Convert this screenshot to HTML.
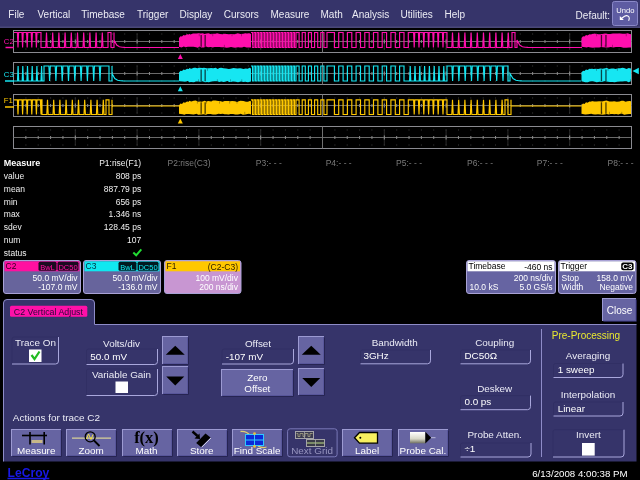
<!DOCTYPE html>
<html><head><meta charset="utf-8"><style>
html,body{margin:0;padding:0;background:#000;width:640px;height:480px;overflow:hidden}
svg{display:block;will-change:transform}
text{font-family:"Liberation Sans", sans-serif}
</style></head><body>
<svg width="640" height="480" viewBox="0 0 640 480">
<defs><clipPath id="gclip0"><rect x="14" y="29.5" width="617" height="24"/></clipPath><clipPath id="gclip1"><rect x="14" y="61.5" width="617" height="24"/></clipPath><clipPath id="gclip2"><rect x="14" y="93.5" width="617" height="24"/></clipPath></defs>
<rect x="0" y="0" width="640" height="480" fill="#000"/>
<rect x="0" y="0" width="640" height="28" fill="#36346a" stroke="none" stroke-width="1" rx="0" /><rect x="0" y="26.5" width="640" height="1.5" fill="#4a4878" stroke="none" stroke-width="1" rx="0" /><text x="8.3" y="18" font-size="10" fill="#ececf4" text-anchor="start" font-weight="normal" >File</text><text x="37.5" y="18" font-size="10" fill="#ececf4" text-anchor="start" font-weight="normal" >Vertical</text><text x="81.3" y="18" font-size="10" fill="#ececf4" text-anchor="start" font-weight="normal" >Timebase</text><text x="137" y="18" font-size="10" fill="#ececf4" text-anchor="start" font-weight="normal" >Trigger</text><text x="179.5" y="18" font-size="10" fill="#ececf4" text-anchor="start" font-weight="normal" >Display</text><text x="223.8" y="18" font-size="10" fill="#ececf4" text-anchor="start" font-weight="normal" >Cursors</text><text x="270.5" y="18" font-size="10" fill="#ececf4" text-anchor="start" font-weight="normal" >Measure</text><text x="320.5" y="18" font-size="10" fill="#ececf4" text-anchor="start" font-weight="normal" >Math</text><text x="352" y="18" font-size="10" fill="#ececf4" text-anchor="start" font-weight="normal" >Analysis</text><text x="400.5" y="18" font-size="10" fill="#ececf4" text-anchor="start" font-weight="normal" >Utilities</text><text x="444.5" y="18" font-size="10" fill="#ececf4" text-anchor="start" font-weight="normal" >Help</text><text x="575.6" y="18.5" font-size="10" fill="#ececf4" text-anchor="start" font-weight="normal" >Default:</text><rect x="612.5" y="1.5" width="25" height="24" fill="#5e5ca2" stroke="#8a88c8" stroke-width="1" rx="2" /><text x="625.3" y="12.8" font-size="7.6" fill="#fff" text-anchor="middle" font-weight="normal" >Undo</text><path d="M619.8,16 L619.8,20 L623.8,20 Z" fill="#fff" stroke="none" stroke-width="1" /><path d="M621,18.8 L624.5,16.2 Q627.5,14.8 629,17 Q629.8,18.5 628.6,20.8" fill="none" stroke="#fff" stroke-width="1.1" /><rect x="13.5" y="30.5" width="618.0" height="22" fill="none" stroke="#8a8a90" stroke-width="1" rx="0" /><line x1="13.5" y1="41.5" x2="631.5" y2="41.5" stroke="#6a6a6a" stroke-width="1" /><line x1="322.5" y1="30.5" x2="322.5" y2="52.5" stroke="#707070" stroke-width="1" /><line x1="25.86" y1="40.0" x2="25.86" y2="43.0" stroke="#8a8a8a" stroke-width="1" /><rect x="25.4" y="33.5" width="1" height="1" fill="#3c3c3c"/><rect x="25.4" y="48.5" width="1" height="1" fill="#3c3c3c"/><line x1="38.22" y1="40.0" x2="38.22" y2="43.0" stroke="#8a8a8a" stroke-width="1" /><rect x="37.7" y="33.5" width="1" height="1" fill="#3c3c3c"/><rect x="37.7" y="48.5" width="1" height="1" fill="#3c3c3c"/><line x1="50.58" y1="40.0" x2="50.58" y2="43.0" stroke="#8a8a8a" stroke-width="1" /><rect x="50.1" y="33.5" width="1" height="1" fill="#3c3c3c"/><rect x="50.1" y="48.5" width="1" height="1" fill="#3c3c3c"/><line x1="62.94" y1="40.0" x2="62.94" y2="43.0" stroke="#8a8a8a" stroke-width="1" /><rect x="62.4" y="33.5" width="1" height="1" fill="#3c3c3c"/><rect x="62.4" y="48.5" width="1" height="1" fill="#3c3c3c"/><line x1="75.3" y1="33.5" x2="75.3" y2="49.5" stroke="#2a2a2a" stroke-width="1" /><line x1="75.3" y1="39.5" x2="75.3" y2="43.5" stroke="#9a9a9a" stroke-width="1" /><rect x="74.8" y="33.5" width="1" height="1" fill="#3c3c3c"/><rect x="74.8" y="48.5" width="1" height="1" fill="#3c3c3c"/><line x1="87.66" y1="40.0" x2="87.66" y2="43.0" stroke="#8a8a8a" stroke-width="1" /><rect x="87.2" y="33.5" width="1" height="1" fill="#3c3c3c"/><rect x="87.2" y="48.5" width="1" height="1" fill="#3c3c3c"/><line x1="100.02" y1="40.0" x2="100.02" y2="43.0" stroke="#8a8a8a" stroke-width="1" /><rect x="99.5" y="33.5" width="1" height="1" fill="#3c3c3c"/><rect x="99.5" y="48.5" width="1" height="1" fill="#3c3c3c"/><line x1="112.38" y1="40.0" x2="112.38" y2="43.0" stroke="#8a8a8a" stroke-width="1" /><rect x="111.9" y="33.5" width="1" height="1" fill="#3c3c3c"/><rect x="111.9" y="48.5" width="1" height="1" fill="#3c3c3c"/><line x1="124.73999999999998" y1="40.0" x2="124.73999999999998" y2="43.0" stroke="#8a8a8a" stroke-width="1" /><rect x="124.2" y="33.5" width="1" height="1" fill="#3c3c3c"/><rect x="124.2" y="48.5" width="1" height="1" fill="#3c3c3c"/><line x1="137.1" y1="33.5" x2="137.1" y2="49.5" stroke="#2a2a2a" stroke-width="1" /><line x1="137.1" y1="39.5" x2="137.1" y2="43.5" stroke="#9a9a9a" stroke-width="1" /><rect x="136.6" y="33.5" width="1" height="1" fill="#3c3c3c"/><rect x="136.6" y="48.5" width="1" height="1" fill="#3c3c3c"/><line x1="149.45999999999998" y1="40.0" x2="149.45999999999998" y2="43.0" stroke="#8a8a8a" stroke-width="1" /><rect x="149.0" y="33.5" width="1" height="1" fill="#3c3c3c"/><rect x="149.0" y="48.5" width="1" height="1" fill="#3c3c3c"/><line x1="161.82" y1="40.0" x2="161.82" y2="43.0" stroke="#8a8a8a" stroke-width="1" /><rect x="161.3" y="33.5" width="1" height="1" fill="#3c3c3c"/><rect x="161.3" y="48.5" width="1" height="1" fill="#3c3c3c"/><line x1="174.18" y1="40.0" x2="174.18" y2="43.0" stroke="#8a8a8a" stroke-width="1" /><rect x="173.7" y="33.5" width="1" height="1" fill="#3c3c3c"/><rect x="173.7" y="48.5" width="1" height="1" fill="#3c3c3c"/><line x1="186.54" y1="40.0" x2="186.54" y2="43.0" stroke="#8a8a8a" stroke-width="1" /><rect x="186.0" y="33.5" width="1" height="1" fill="#3c3c3c"/><rect x="186.0" y="48.5" width="1" height="1" fill="#3c3c3c"/><line x1="198.9" y1="33.5" x2="198.9" y2="49.5" stroke="#2a2a2a" stroke-width="1" /><line x1="198.9" y1="39.5" x2="198.9" y2="43.5" stroke="#9a9a9a" stroke-width="1" /><rect x="198.4" y="33.5" width="1" height="1" fill="#3c3c3c"/><rect x="198.4" y="48.5" width="1" height="1" fill="#3c3c3c"/><line x1="211.26" y1="40.0" x2="211.26" y2="43.0" stroke="#8a8a8a" stroke-width="1" /><rect x="210.8" y="33.5" width="1" height="1" fill="#3c3c3c"/><rect x="210.8" y="48.5" width="1" height="1" fill="#3c3c3c"/><line x1="223.61999999999998" y1="40.0" x2="223.61999999999998" y2="43.0" stroke="#8a8a8a" stroke-width="1" /><rect x="223.1" y="33.5" width="1" height="1" fill="#3c3c3c"/><rect x="223.1" y="48.5" width="1" height="1" fill="#3c3c3c"/><line x1="235.97999999999996" y1="40.0" x2="235.97999999999996" y2="43.0" stroke="#8a8a8a" stroke-width="1" /><rect x="235.5" y="33.5" width="1" height="1" fill="#3c3c3c"/><rect x="235.5" y="48.5" width="1" height="1" fill="#3c3c3c"/><line x1="248.34" y1="40.0" x2="248.34" y2="43.0" stroke="#8a8a8a" stroke-width="1" /><rect x="247.8" y="33.5" width="1" height="1" fill="#3c3c3c"/><rect x="247.8" y="48.5" width="1" height="1" fill="#3c3c3c"/><line x1="260.7" y1="33.5" x2="260.7" y2="49.5" stroke="#2a2a2a" stroke-width="1" /><line x1="260.7" y1="39.5" x2="260.7" y2="43.5" stroke="#9a9a9a" stroke-width="1" /><rect x="260.2" y="33.5" width="1" height="1" fill="#3c3c3c"/><rect x="260.2" y="48.5" width="1" height="1" fill="#3c3c3c"/><line x1="273.06" y1="40.0" x2="273.06" y2="43.0" stroke="#8a8a8a" stroke-width="1" /><rect x="272.6" y="33.5" width="1" height="1" fill="#3c3c3c"/><rect x="272.6" y="48.5" width="1" height="1" fill="#3c3c3c"/><line x1="285.41999999999996" y1="40.0" x2="285.41999999999996" y2="43.0" stroke="#8a8a8a" stroke-width="1" /><rect x="284.9" y="33.5" width="1" height="1" fill="#3c3c3c"/><rect x="284.9" y="48.5" width="1" height="1" fill="#3c3c3c"/><line x1="297.78" y1="40.0" x2="297.78" y2="43.0" stroke="#8a8a8a" stroke-width="1" /><rect x="297.3" y="33.5" width="1" height="1" fill="#3c3c3c"/><rect x="297.3" y="48.5" width="1" height="1" fill="#3c3c3c"/><line x1="310.14" y1="40.0" x2="310.14" y2="43.0" stroke="#8a8a8a" stroke-width="1" /><rect x="309.6" y="33.5" width="1" height="1" fill="#3c3c3c"/><rect x="309.6" y="48.5" width="1" height="1" fill="#3c3c3c"/><line x1="334.86" y1="40.0" x2="334.86" y2="43.0" stroke="#8a8a8a" stroke-width="1" /><rect x="334.4" y="33.5" width="1" height="1" fill="#3c3c3c"/><rect x="334.4" y="48.5" width="1" height="1" fill="#3c3c3c"/><line x1="347.21999999999997" y1="40.0" x2="347.21999999999997" y2="43.0" stroke="#8a8a8a" stroke-width="1" /><rect x="346.7" y="33.5" width="1" height="1" fill="#3c3c3c"/><rect x="346.7" y="48.5" width="1" height="1" fill="#3c3c3c"/><line x1="359.58" y1="40.0" x2="359.58" y2="43.0" stroke="#8a8a8a" stroke-width="1" /><rect x="359.1" y="33.5" width="1" height="1" fill="#3c3c3c"/><rect x="359.1" y="48.5" width="1" height="1" fill="#3c3c3c"/><line x1="371.93999999999994" y1="40.0" x2="371.93999999999994" y2="43.0" stroke="#8a8a8a" stroke-width="1" /><rect x="371.4" y="33.5" width="1" height="1" fill="#3c3c3c"/><rect x="371.4" y="48.5" width="1" height="1" fill="#3c3c3c"/><line x1="384.3" y1="33.5" x2="384.3" y2="49.5" stroke="#2a2a2a" stroke-width="1" /><line x1="384.3" y1="39.5" x2="384.3" y2="43.5" stroke="#9a9a9a" stroke-width="1" /><rect x="383.8" y="33.5" width="1" height="1" fill="#3c3c3c"/><rect x="383.8" y="48.5" width="1" height="1" fill="#3c3c3c"/><line x1="396.65999999999997" y1="40.0" x2="396.65999999999997" y2="43.0" stroke="#8a8a8a" stroke-width="1" /><rect x="396.2" y="33.5" width="1" height="1" fill="#3c3c3c"/><rect x="396.2" y="48.5" width="1" height="1" fill="#3c3c3c"/><line x1="409.02" y1="40.0" x2="409.02" y2="43.0" stroke="#8a8a8a" stroke-width="1" /><rect x="408.5" y="33.5" width="1" height="1" fill="#3c3c3c"/><rect x="408.5" y="48.5" width="1" height="1" fill="#3c3c3c"/><line x1="421.38" y1="40.0" x2="421.38" y2="43.0" stroke="#8a8a8a" stroke-width="1" /><rect x="420.9" y="33.5" width="1" height="1" fill="#3c3c3c"/><rect x="420.9" y="48.5" width="1" height="1" fill="#3c3c3c"/><line x1="433.73999999999995" y1="40.0" x2="433.73999999999995" y2="43.0" stroke="#8a8a8a" stroke-width="1" /><rect x="433.2" y="33.5" width="1" height="1" fill="#3c3c3c"/><rect x="433.2" y="48.5" width="1" height="1" fill="#3c3c3c"/><line x1="446.1" y1="33.5" x2="446.1" y2="49.5" stroke="#2a2a2a" stroke-width="1" /><line x1="446.1" y1="39.5" x2="446.1" y2="43.5" stroke="#9a9a9a" stroke-width="1" /><rect x="445.6" y="33.5" width="1" height="1" fill="#3c3c3c"/><rect x="445.6" y="48.5" width="1" height="1" fill="#3c3c3c"/><line x1="458.4599999999999" y1="40.0" x2="458.4599999999999" y2="43.0" stroke="#8a8a8a" stroke-width="1" /><rect x="458.0" y="33.5" width="1" height="1" fill="#3c3c3c"/><rect x="458.0" y="48.5" width="1" height="1" fill="#3c3c3c"/><line x1="470.82" y1="40.0" x2="470.82" y2="43.0" stroke="#8a8a8a" stroke-width="1" /><rect x="470.3" y="33.5" width="1" height="1" fill="#3c3c3c"/><rect x="470.3" y="48.5" width="1" height="1" fill="#3c3c3c"/><line x1="483.18" y1="40.0" x2="483.18" y2="43.0" stroke="#8a8a8a" stroke-width="1" /><rect x="482.7" y="33.5" width="1" height="1" fill="#3c3c3c"/><rect x="482.7" y="48.5" width="1" height="1" fill="#3c3c3c"/><line x1="495.53999999999996" y1="40.0" x2="495.53999999999996" y2="43.0" stroke="#8a8a8a" stroke-width="1" /><rect x="495.0" y="33.5" width="1" height="1" fill="#3c3c3c"/><rect x="495.0" y="48.5" width="1" height="1" fill="#3c3c3c"/><line x1="507.9" y1="33.5" x2="507.9" y2="49.5" stroke="#2a2a2a" stroke-width="1" /><line x1="507.9" y1="39.5" x2="507.9" y2="43.5" stroke="#9a9a9a" stroke-width="1" /><rect x="507.4" y="33.5" width="1" height="1" fill="#3c3c3c"/><rect x="507.4" y="48.5" width="1" height="1" fill="#3c3c3c"/><line x1="520.26" y1="40.0" x2="520.26" y2="43.0" stroke="#8a8a8a" stroke-width="1" /><rect x="519.8" y="33.5" width="1" height="1" fill="#3c3c3c"/><rect x="519.8" y="48.5" width="1" height="1" fill="#3c3c3c"/><line x1="532.62" y1="40.0" x2="532.62" y2="43.0" stroke="#8a8a8a" stroke-width="1" /><rect x="532.1" y="33.5" width="1" height="1" fill="#3c3c3c"/><rect x="532.1" y="48.5" width="1" height="1" fill="#3c3c3c"/><line x1="544.98" y1="40.0" x2="544.98" y2="43.0" stroke="#8a8a8a" stroke-width="1" /><rect x="544.5" y="33.5" width="1" height="1" fill="#3c3c3c"/><rect x="544.5" y="48.5" width="1" height="1" fill="#3c3c3c"/><line x1="557.3399999999999" y1="40.0" x2="557.3399999999999" y2="43.0" stroke="#8a8a8a" stroke-width="1" /><rect x="556.8" y="33.5" width="1" height="1" fill="#3c3c3c"/><rect x="556.8" y="48.5" width="1" height="1" fill="#3c3c3c"/><line x1="569.7" y1="33.5" x2="569.7" y2="49.5" stroke="#2a2a2a" stroke-width="1" /><line x1="569.7" y1="39.5" x2="569.7" y2="43.5" stroke="#9a9a9a" stroke-width="1" /><rect x="569.2" y="33.5" width="1" height="1" fill="#3c3c3c"/><rect x="569.2" y="48.5" width="1" height="1" fill="#3c3c3c"/><line x1="582.06" y1="40.0" x2="582.06" y2="43.0" stroke="#8a8a8a" stroke-width="1" /><rect x="581.6" y="33.5" width="1" height="1" fill="#3c3c3c"/><rect x="581.6" y="48.5" width="1" height="1" fill="#3c3c3c"/><line x1="594.42" y1="40.0" x2="594.42" y2="43.0" stroke="#8a8a8a" stroke-width="1" /><rect x="593.9" y="33.5" width="1" height="1" fill="#3c3c3c"/><rect x="593.9" y="48.5" width="1" height="1" fill="#3c3c3c"/><line x1="606.78" y1="40.0" x2="606.78" y2="43.0" stroke="#8a8a8a" stroke-width="1" /><rect x="606.3" y="33.5" width="1" height="1" fill="#3c3c3c"/><rect x="606.3" y="48.5" width="1" height="1" fill="#3c3c3c"/><line x1="619.14" y1="40.0" x2="619.14" y2="43.0" stroke="#8a8a8a" stroke-width="1" /><rect x="618.6" y="33.5" width="1" height="1" fill="#3c3c3c"/><rect x="618.6" y="48.5" width="1" height="1" fill="#3c3c3c"/><rect x="13.5" y="62.5" width="618.0" height="22" fill="none" stroke="#8a8a90" stroke-width="1" rx="0" /><line x1="13.5" y1="73.5" x2="631.5" y2="73.5" stroke="#6a6a6a" stroke-width="1" /><line x1="322.5" y1="62.5" x2="322.5" y2="84.5" stroke="#707070" stroke-width="1" /><line x1="25.86" y1="72.0" x2="25.86" y2="75.0" stroke="#8a8a8a" stroke-width="1" /><rect x="25.4" y="65.5" width="1" height="1" fill="#3c3c3c"/><rect x="25.4" y="80.5" width="1" height="1" fill="#3c3c3c"/><line x1="38.22" y1="72.0" x2="38.22" y2="75.0" stroke="#8a8a8a" stroke-width="1" /><rect x="37.7" y="65.5" width="1" height="1" fill="#3c3c3c"/><rect x="37.7" y="80.5" width="1" height="1" fill="#3c3c3c"/><line x1="50.58" y1="72.0" x2="50.58" y2="75.0" stroke="#8a8a8a" stroke-width="1" /><rect x="50.1" y="65.5" width="1" height="1" fill="#3c3c3c"/><rect x="50.1" y="80.5" width="1" height="1" fill="#3c3c3c"/><line x1="62.94" y1="72.0" x2="62.94" y2="75.0" stroke="#8a8a8a" stroke-width="1" /><rect x="62.4" y="65.5" width="1" height="1" fill="#3c3c3c"/><rect x="62.4" y="80.5" width="1" height="1" fill="#3c3c3c"/><line x1="75.3" y1="65.5" x2="75.3" y2="81.5" stroke="#2a2a2a" stroke-width="1" /><line x1="75.3" y1="71.5" x2="75.3" y2="75.5" stroke="#9a9a9a" stroke-width="1" /><rect x="74.8" y="65.5" width="1" height="1" fill="#3c3c3c"/><rect x="74.8" y="80.5" width="1" height="1" fill="#3c3c3c"/><line x1="87.66" y1="72.0" x2="87.66" y2="75.0" stroke="#8a8a8a" stroke-width="1" /><rect x="87.2" y="65.5" width="1" height="1" fill="#3c3c3c"/><rect x="87.2" y="80.5" width="1" height="1" fill="#3c3c3c"/><line x1="100.02" y1="72.0" x2="100.02" y2="75.0" stroke="#8a8a8a" stroke-width="1" /><rect x="99.5" y="65.5" width="1" height="1" fill="#3c3c3c"/><rect x="99.5" y="80.5" width="1" height="1" fill="#3c3c3c"/><line x1="112.38" y1="72.0" x2="112.38" y2="75.0" stroke="#8a8a8a" stroke-width="1" /><rect x="111.9" y="65.5" width="1" height="1" fill="#3c3c3c"/><rect x="111.9" y="80.5" width="1" height="1" fill="#3c3c3c"/><line x1="124.73999999999998" y1="72.0" x2="124.73999999999998" y2="75.0" stroke="#8a8a8a" stroke-width="1" /><rect x="124.2" y="65.5" width="1" height="1" fill="#3c3c3c"/><rect x="124.2" y="80.5" width="1" height="1" fill="#3c3c3c"/><line x1="137.1" y1="65.5" x2="137.1" y2="81.5" stroke="#2a2a2a" stroke-width="1" /><line x1="137.1" y1="71.5" x2="137.1" y2="75.5" stroke="#9a9a9a" stroke-width="1" /><rect x="136.6" y="65.5" width="1" height="1" fill="#3c3c3c"/><rect x="136.6" y="80.5" width="1" height="1" fill="#3c3c3c"/><line x1="149.45999999999998" y1="72.0" x2="149.45999999999998" y2="75.0" stroke="#8a8a8a" stroke-width="1" /><rect x="149.0" y="65.5" width="1" height="1" fill="#3c3c3c"/><rect x="149.0" y="80.5" width="1" height="1" fill="#3c3c3c"/><line x1="161.82" y1="72.0" x2="161.82" y2="75.0" stroke="#8a8a8a" stroke-width="1" /><rect x="161.3" y="65.5" width="1" height="1" fill="#3c3c3c"/><rect x="161.3" y="80.5" width="1" height="1" fill="#3c3c3c"/><line x1="174.18" y1="72.0" x2="174.18" y2="75.0" stroke="#8a8a8a" stroke-width="1" /><rect x="173.7" y="65.5" width="1" height="1" fill="#3c3c3c"/><rect x="173.7" y="80.5" width="1" height="1" fill="#3c3c3c"/><line x1="186.54" y1="72.0" x2="186.54" y2="75.0" stroke="#8a8a8a" stroke-width="1" /><rect x="186.0" y="65.5" width="1" height="1" fill="#3c3c3c"/><rect x="186.0" y="80.5" width="1" height="1" fill="#3c3c3c"/><line x1="198.9" y1="65.5" x2="198.9" y2="81.5" stroke="#2a2a2a" stroke-width="1" /><line x1="198.9" y1="71.5" x2="198.9" y2="75.5" stroke="#9a9a9a" stroke-width="1" /><rect x="198.4" y="65.5" width="1" height="1" fill="#3c3c3c"/><rect x="198.4" y="80.5" width="1" height="1" fill="#3c3c3c"/><line x1="211.26" y1="72.0" x2="211.26" y2="75.0" stroke="#8a8a8a" stroke-width="1" /><rect x="210.8" y="65.5" width="1" height="1" fill="#3c3c3c"/><rect x="210.8" y="80.5" width="1" height="1" fill="#3c3c3c"/><line x1="223.61999999999998" y1="72.0" x2="223.61999999999998" y2="75.0" stroke="#8a8a8a" stroke-width="1" /><rect x="223.1" y="65.5" width="1" height="1" fill="#3c3c3c"/><rect x="223.1" y="80.5" width="1" height="1" fill="#3c3c3c"/><line x1="235.97999999999996" y1="72.0" x2="235.97999999999996" y2="75.0" stroke="#8a8a8a" stroke-width="1" /><rect x="235.5" y="65.5" width="1" height="1" fill="#3c3c3c"/><rect x="235.5" y="80.5" width="1" height="1" fill="#3c3c3c"/><line x1="248.34" y1="72.0" x2="248.34" y2="75.0" stroke="#8a8a8a" stroke-width="1" /><rect x="247.8" y="65.5" width="1" height="1" fill="#3c3c3c"/><rect x="247.8" y="80.5" width="1" height="1" fill="#3c3c3c"/><line x1="260.7" y1="65.5" x2="260.7" y2="81.5" stroke="#2a2a2a" stroke-width="1" /><line x1="260.7" y1="71.5" x2="260.7" y2="75.5" stroke="#9a9a9a" stroke-width="1" /><rect x="260.2" y="65.5" width="1" height="1" fill="#3c3c3c"/><rect x="260.2" y="80.5" width="1" height="1" fill="#3c3c3c"/><line x1="273.06" y1="72.0" x2="273.06" y2="75.0" stroke="#8a8a8a" stroke-width="1" /><rect x="272.6" y="65.5" width="1" height="1" fill="#3c3c3c"/><rect x="272.6" y="80.5" width="1" height="1" fill="#3c3c3c"/><line x1="285.41999999999996" y1="72.0" x2="285.41999999999996" y2="75.0" stroke="#8a8a8a" stroke-width="1" /><rect x="284.9" y="65.5" width="1" height="1" fill="#3c3c3c"/><rect x="284.9" y="80.5" width="1" height="1" fill="#3c3c3c"/><line x1="297.78" y1="72.0" x2="297.78" y2="75.0" stroke="#8a8a8a" stroke-width="1" /><rect x="297.3" y="65.5" width="1" height="1" fill="#3c3c3c"/><rect x="297.3" y="80.5" width="1" height="1" fill="#3c3c3c"/><line x1="310.14" y1="72.0" x2="310.14" y2="75.0" stroke="#8a8a8a" stroke-width="1" /><rect x="309.6" y="65.5" width="1" height="1" fill="#3c3c3c"/><rect x="309.6" y="80.5" width="1" height="1" fill="#3c3c3c"/><line x1="334.86" y1="72.0" x2="334.86" y2="75.0" stroke="#8a8a8a" stroke-width="1" /><rect x="334.4" y="65.5" width="1" height="1" fill="#3c3c3c"/><rect x="334.4" y="80.5" width="1" height="1" fill="#3c3c3c"/><line x1="347.21999999999997" y1="72.0" x2="347.21999999999997" y2="75.0" stroke="#8a8a8a" stroke-width="1" /><rect x="346.7" y="65.5" width="1" height="1" fill="#3c3c3c"/><rect x="346.7" y="80.5" width="1" height="1" fill="#3c3c3c"/><line x1="359.58" y1="72.0" x2="359.58" y2="75.0" stroke="#8a8a8a" stroke-width="1" /><rect x="359.1" y="65.5" width="1" height="1" fill="#3c3c3c"/><rect x="359.1" y="80.5" width="1" height="1" fill="#3c3c3c"/><line x1="371.93999999999994" y1="72.0" x2="371.93999999999994" y2="75.0" stroke="#8a8a8a" stroke-width="1" /><rect x="371.4" y="65.5" width="1" height="1" fill="#3c3c3c"/><rect x="371.4" y="80.5" width="1" height="1" fill="#3c3c3c"/><line x1="384.3" y1="65.5" x2="384.3" y2="81.5" stroke="#2a2a2a" stroke-width="1" /><line x1="384.3" y1="71.5" x2="384.3" y2="75.5" stroke="#9a9a9a" stroke-width="1" /><rect x="383.8" y="65.5" width="1" height="1" fill="#3c3c3c"/><rect x="383.8" y="80.5" width="1" height="1" fill="#3c3c3c"/><line x1="396.65999999999997" y1="72.0" x2="396.65999999999997" y2="75.0" stroke="#8a8a8a" stroke-width="1" /><rect x="396.2" y="65.5" width="1" height="1" fill="#3c3c3c"/><rect x="396.2" y="80.5" width="1" height="1" fill="#3c3c3c"/><line x1="409.02" y1="72.0" x2="409.02" y2="75.0" stroke="#8a8a8a" stroke-width="1" /><rect x="408.5" y="65.5" width="1" height="1" fill="#3c3c3c"/><rect x="408.5" y="80.5" width="1" height="1" fill="#3c3c3c"/><line x1="421.38" y1="72.0" x2="421.38" y2="75.0" stroke="#8a8a8a" stroke-width="1" /><rect x="420.9" y="65.5" width="1" height="1" fill="#3c3c3c"/><rect x="420.9" y="80.5" width="1" height="1" fill="#3c3c3c"/><line x1="433.73999999999995" y1="72.0" x2="433.73999999999995" y2="75.0" stroke="#8a8a8a" stroke-width="1" /><rect x="433.2" y="65.5" width="1" height="1" fill="#3c3c3c"/><rect x="433.2" y="80.5" width="1" height="1" fill="#3c3c3c"/><line x1="446.1" y1="65.5" x2="446.1" y2="81.5" stroke="#2a2a2a" stroke-width="1" /><line x1="446.1" y1="71.5" x2="446.1" y2="75.5" stroke="#9a9a9a" stroke-width="1" /><rect x="445.6" y="65.5" width="1" height="1" fill="#3c3c3c"/><rect x="445.6" y="80.5" width="1" height="1" fill="#3c3c3c"/><line x1="458.4599999999999" y1="72.0" x2="458.4599999999999" y2="75.0" stroke="#8a8a8a" stroke-width="1" /><rect x="458.0" y="65.5" width="1" height="1" fill="#3c3c3c"/><rect x="458.0" y="80.5" width="1" height="1" fill="#3c3c3c"/><line x1="470.82" y1="72.0" x2="470.82" y2="75.0" stroke="#8a8a8a" stroke-width="1" /><rect x="470.3" y="65.5" width="1" height="1" fill="#3c3c3c"/><rect x="470.3" y="80.5" width="1" height="1" fill="#3c3c3c"/><line x1="483.18" y1="72.0" x2="483.18" y2="75.0" stroke="#8a8a8a" stroke-width="1" /><rect x="482.7" y="65.5" width="1" height="1" fill="#3c3c3c"/><rect x="482.7" y="80.5" width="1" height="1" fill="#3c3c3c"/><line x1="495.53999999999996" y1="72.0" x2="495.53999999999996" y2="75.0" stroke="#8a8a8a" stroke-width="1" /><rect x="495.0" y="65.5" width="1" height="1" fill="#3c3c3c"/><rect x="495.0" y="80.5" width="1" height="1" fill="#3c3c3c"/><line x1="507.9" y1="65.5" x2="507.9" y2="81.5" stroke="#2a2a2a" stroke-width="1" /><line x1="507.9" y1="71.5" x2="507.9" y2="75.5" stroke="#9a9a9a" stroke-width="1" /><rect x="507.4" y="65.5" width="1" height="1" fill="#3c3c3c"/><rect x="507.4" y="80.5" width="1" height="1" fill="#3c3c3c"/><line x1="520.26" y1="72.0" x2="520.26" y2="75.0" stroke="#8a8a8a" stroke-width="1" /><rect x="519.8" y="65.5" width="1" height="1" fill="#3c3c3c"/><rect x="519.8" y="80.5" width="1" height="1" fill="#3c3c3c"/><line x1="532.62" y1="72.0" x2="532.62" y2="75.0" stroke="#8a8a8a" stroke-width="1" /><rect x="532.1" y="65.5" width="1" height="1" fill="#3c3c3c"/><rect x="532.1" y="80.5" width="1" height="1" fill="#3c3c3c"/><line x1="544.98" y1="72.0" x2="544.98" y2="75.0" stroke="#8a8a8a" stroke-width="1" /><rect x="544.5" y="65.5" width="1" height="1" fill="#3c3c3c"/><rect x="544.5" y="80.5" width="1" height="1" fill="#3c3c3c"/><line x1="557.3399999999999" y1="72.0" x2="557.3399999999999" y2="75.0" stroke="#8a8a8a" stroke-width="1" /><rect x="556.8" y="65.5" width="1" height="1" fill="#3c3c3c"/><rect x="556.8" y="80.5" width="1" height="1" fill="#3c3c3c"/><line x1="569.7" y1="65.5" x2="569.7" y2="81.5" stroke="#2a2a2a" stroke-width="1" /><line x1="569.7" y1="71.5" x2="569.7" y2="75.5" stroke="#9a9a9a" stroke-width="1" /><rect x="569.2" y="65.5" width="1" height="1" fill="#3c3c3c"/><rect x="569.2" y="80.5" width="1" height="1" fill="#3c3c3c"/><line x1="582.06" y1="72.0" x2="582.06" y2="75.0" stroke="#8a8a8a" stroke-width="1" /><rect x="581.6" y="65.5" width="1" height="1" fill="#3c3c3c"/><rect x="581.6" y="80.5" width="1" height="1" fill="#3c3c3c"/><line x1="594.42" y1="72.0" x2="594.42" y2="75.0" stroke="#8a8a8a" stroke-width="1" /><rect x="593.9" y="65.5" width="1" height="1" fill="#3c3c3c"/><rect x="593.9" y="80.5" width="1" height="1" fill="#3c3c3c"/><line x1="606.78" y1="72.0" x2="606.78" y2="75.0" stroke="#8a8a8a" stroke-width="1" /><rect x="606.3" y="65.5" width="1" height="1" fill="#3c3c3c"/><rect x="606.3" y="80.5" width="1" height="1" fill="#3c3c3c"/><line x1="619.14" y1="72.0" x2="619.14" y2="75.0" stroke="#8a8a8a" stroke-width="1" /><rect x="618.6" y="65.5" width="1" height="1" fill="#3c3c3c"/><rect x="618.6" y="80.5" width="1" height="1" fill="#3c3c3c"/><rect x="13.5" y="94.5" width="618.0" height="22" fill="none" stroke="#8a8a90" stroke-width="1" rx="0" /><line x1="13.5" y1="105.5" x2="631.5" y2="105.5" stroke="#6a6a6a" stroke-width="1" /><line x1="322.5" y1="94.5" x2="322.5" y2="116.5" stroke="#707070" stroke-width="1" /><line x1="25.86" y1="104.0" x2="25.86" y2="107.0" stroke="#8a8a8a" stroke-width="1" /><rect x="25.4" y="97.5" width="1" height="1" fill="#3c3c3c"/><rect x="25.4" y="112.5" width="1" height="1" fill="#3c3c3c"/><line x1="38.22" y1="104.0" x2="38.22" y2="107.0" stroke="#8a8a8a" stroke-width="1" /><rect x="37.7" y="97.5" width="1" height="1" fill="#3c3c3c"/><rect x="37.7" y="112.5" width="1" height="1" fill="#3c3c3c"/><line x1="50.58" y1="104.0" x2="50.58" y2="107.0" stroke="#8a8a8a" stroke-width="1" /><rect x="50.1" y="97.5" width="1" height="1" fill="#3c3c3c"/><rect x="50.1" y="112.5" width="1" height="1" fill="#3c3c3c"/><line x1="62.94" y1="104.0" x2="62.94" y2="107.0" stroke="#8a8a8a" stroke-width="1" /><rect x="62.4" y="97.5" width="1" height="1" fill="#3c3c3c"/><rect x="62.4" y="112.5" width="1" height="1" fill="#3c3c3c"/><line x1="75.3" y1="97.5" x2="75.3" y2="113.5" stroke="#2a2a2a" stroke-width="1" /><line x1="75.3" y1="103.5" x2="75.3" y2="107.5" stroke="#9a9a9a" stroke-width="1" /><rect x="74.8" y="97.5" width="1" height="1" fill="#3c3c3c"/><rect x="74.8" y="112.5" width="1" height="1" fill="#3c3c3c"/><line x1="87.66" y1="104.0" x2="87.66" y2="107.0" stroke="#8a8a8a" stroke-width="1" /><rect x="87.2" y="97.5" width="1" height="1" fill="#3c3c3c"/><rect x="87.2" y="112.5" width="1" height="1" fill="#3c3c3c"/><line x1="100.02" y1="104.0" x2="100.02" y2="107.0" stroke="#8a8a8a" stroke-width="1" /><rect x="99.5" y="97.5" width="1" height="1" fill="#3c3c3c"/><rect x="99.5" y="112.5" width="1" height="1" fill="#3c3c3c"/><line x1="112.38" y1="104.0" x2="112.38" y2="107.0" stroke="#8a8a8a" stroke-width="1" /><rect x="111.9" y="97.5" width="1" height="1" fill="#3c3c3c"/><rect x="111.9" y="112.5" width="1" height="1" fill="#3c3c3c"/><line x1="124.73999999999998" y1="104.0" x2="124.73999999999998" y2="107.0" stroke="#8a8a8a" stroke-width="1" /><rect x="124.2" y="97.5" width="1" height="1" fill="#3c3c3c"/><rect x="124.2" y="112.5" width="1" height="1" fill="#3c3c3c"/><line x1="137.1" y1="97.5" x2="137.1" y2="113.5" stroke="#2a2a2a" stroke-width="1" /><line x1="137.1" y1="103.5" x2="137.1" y2="107.5" stroke="#9a9a9a" stroke-width="1" /><rect x="136.6" y="97.5" width="1" height="1" fill="#3c3c3c"/><rect x="136.6" y="112.5" width="1" height="1" fill="#3c3c3c"/><line x1="149.45999999999998" y1="104.0" x2="149.45999999999998" y2="107.0" stroke="#8a8a8a" stroke-width="1" /><rect x="149.0" y="97.5" width="1" height="1" fill="#3c3c3c"/><rect x="149.0" y="112.5" width="1" height="1" fill="#3c3c3c"/><line x1="161.82" y1="104.0" x2="161.82" y2="107.0" stroke="#8a8a8a" stroke-width="1" /><rect x="161.3" y="97.5" width="1" height="1" fill="#3c3c3c"/><rect x="161.3" y="112.5" width="1" height="1" fill="#3c3c3c"/><line x1="174.18" y1="104.0" x2="174.18" y2="107.0" stroke="#8a8a8a" stroke-width="1" /><rect x="173.7" y="97.5" width="1" height="1" fill="#3c3c3c"/><rect x="173.7" y="112.5" width="1" height="1" fill="#3c3c3c"/><line x1="186.54" y1="104.0" x2="186.54" y2="107.0" stroke="#8a8a8a" stroke-width="1" /><rect x="186.0" y="97.5" width="1" height="1" fill="#3c3c3c"/><rect x="186.0" y="112.5" width="1" height="1" fill="#3c3c3c"/><line x1="198.9" y1="97.5" x2="198.9" y2="113.5" stroke="#2a2a2a" stroke-width="1" /><line x1="198.9" y1="103.5" x2="198.9" y2="107.5" stroke="#9a9a9a" stroke-width="1" /><rect x="198.4" y="97.5" width="1" height="1" fill="#3c3c3c"/><rect x="198.4" y="112.5" width="1" height="1" fill="#3c3c3c"/><line x1="211.26" y1="104.0" x2="211.26" y2="107.0" stroke="#8a8a8a" stroke-width="1" /><rect x="210.8" y="97.5" width="1" height="1" fill="#3c3c3c"/><rect x="210.8" y="112.5" width="1" height="1" fill="#3c3c3c"/><line x1="223.61999999999998" y1="104.0" x2="223.61999999999998" y2="107.0" stroke="#8a8a8a" stroke-width="1" /><rect x="223.1" y="97.5" width="1" height="1" fill="#3c3c3c"/><rect x="223.1" y="112.5" width="1" height="1" fill="#3c3c3c"/><line x1="235.97999999999996" y1="104.0" x2="235.97999999999996" y2="107.0" stroke="#8a8a8a" stroke-width="1" /><rect x="235.5" y="97.5" width="1" height="1" fill="#3c3c3c"/><rect x="235.5" y="112.5" width="1" height="1" fill="#3c3c3c"/><line x1="248.34" y1="104.0" x2="248.34" y2="107.0" stroke="#8a8a8a" stroke-width="1" /><rect x="247.8" y="97.5" width="1" height="1" fill="#3c3c3c"/><rect x="247.8" y="112.5" width="1" height="1" fill="#3c3c3c"/><line x1="260.7" y1="97.5" x2="260.7" y2="113.5" stroke="#2a2a2a" stroke-width="1" /><line x1="260.7" y1="103.5" x2="260.7" y2="107.5" stroke="#9a9a9a" stroke-width="1" /><rect x="260.2" y="97.5" width="1" height="1" fill="#3c3c3c"/><rect x="260.2" y="112.5" width="1" height="1" fill="#3c3c3c"/><line x1="273.06" y1="104.0" x2="273.06" y2="107.0" stroke="#8a8a8a" stroke-width="1" /><rect x="272.6" y="97.5" width="1" height="1" fill="#3c3c3c"/><rect x="272.6" y="112.5" width="1" height="1" fill="#3c3c3c"/><line x1="285.41999999999996" y1="104.0" x2="285.41999999999996" y2="107.0" stroke="#8a8a8a" stroke-width="1" /><rect x="284.9" y="97.5" width="1" height="1" fill="#3c3c3c"/><rect x="284.9" y="112.5" width="1" height="1" fill="#3c3c3c"/><line x1="297.78" y1="104.0" x2="297.78" y2="107.0" stroke="#8a8a8a" stroke-width="1" /><rect x="297.3" y="97.5" width="1" height="1" fill="#3c3c3c"/><rect x="297.3" y="112.5" width="1" height="1" fill="#3c3c3c"/><line x1="310.14" y1="104.0" x2="310.14" y2="107.0" stroke="#8a8a8a" stroke-width="1" /><rect x="309.6" y="97.5" width="1" height="1" fill="#3c3c3c"/><rect x="309.6" y="112.5" width="1" height="1" fill="#3c3c3c"/><line x1="334.86" y1="104.0" x2="334.86" y2="107.0" stroke="#8a8a8a" stroke-width="1" /><rect x="334.4" y="97.5" width="1" height="1" fill="#3c3c3c"/><rect x="334.4" y="112.5" width="1" height="1" fill="#3c3c3c"/><line x1="347.21999999999997" y1="104.0" x2="347.21999999999997" y2="107.0" stroke="#8a8a8a" stroke-width="1" /><rect x="346.7" y="97.5" width="1" height="1" fill="#3c3c3c"/><rect x="346.7" y="112.5" width="1" height="1" fill="#3c3c3c"/><line x1="359.58" y1="104.0" x2="359.58" y2="107.0" stroke="#8a8a8a" stroke-width="1" /><rect x="359.1" y="97.5" width="1" height="1" fill="#3c3c3c"/><rect x="359.1" y="112.5" width="1" height="1" fill="#3c3c3c"/><line x1="371.93999999999994" y1="104.0" x2="371.93999999999994" y2="107.0" stroke="#8a8a8a" stroke-width="1" /><rect x="371.4" y="97.5" width="1" height="1" fill="#3c3c3c"/><rect x="371.4" y="112.5" width="1" height="1" fill="#3c3c3c"/><line x1="384.3" y1="97.5" x2="384.3" y2="113.5" stroke="#2a2a2a" stroke-width="1" /><line x1="384.3" y1="103.5" x2="384.3" y2="107.5" stroke="#9a9a9a" stroke-width="1" /><rect x="383.8" y="97.5" width="1" height="1" fill="#3c3c3c"/><rect x="383.8" y="112.5" width="1" height="1" fill="#3c3c3c"/><line x1="396.65999999999997" y1="104.0" x2="396.65999999999997" y2="107.0" stroke="#8a8a8a" stroke-width="1" /><rect x="396.2" y="97.5" width="1" height="1" fill="#3c3c3c"/><rect x="396.2" y="112.5" width="1" height="1" fill="#3c3c3c"/><line x1="409.02" y1="104.0" x2="409.02" y2="107.0" stroke="#8a8a8a" stroke-width="1" /><rect x="408.5" y="97.5" width="1" height="1" fill="#3c3c3c"/><rect x="408.5" y="112.5" width="1" height="1" fill="#3c3c3c"/><line x1="421.38" y1="104.0" x2="421.38" y2="107.0" stroke="#8a8a8a" stroke-width="1" /><rect x="420.9" y="97.5" width="1" height="1" fill="#3c3c3c"/><rect x="420.9" y="112.5" width="1" height="1" fill="#3c3c3c"/><line x1="433.73999999999995" y1="104.0" x2="433.73999999999995" y2="107.0" stroke="#8a8a8a" stroke-width="1" /><rect x="433.2" y="97.5" width="1" height="1" fill="#3c3c3c"/><rect x="433.2" y="112.5" width="1" height="1" fill="#3c3c3c"/><line x1="446.1" y1="97.5" x2="446.1" y2="113.5" stroke="#2a2a2a" stroke-width="1" /><line x1="446.1" y1="103.5" x2="446.1" y2="107.5" stroke="#9a9a9a" stroke-width="1" /><rect x="445.6" y="97.5" width="1" height="1" fill="#3c3c3c"/><rect x="445.6" y="112.5" width="1" height="1" fill="#3c3c3c"/><line x1="458.4599999999999" y1="104.0" x2="458.4599999999999" y2="107.0" stroke="#8a8a8a" stroke-width="1" /><rect x="458.0" y="97.5" width="1" height="1" fill="#3c3c3c"/><rect x="458.0" y="112.5" width="1" height="1" fill="#3c3c3c"/><line x1="470.82" y1="104.0" x2="470.82" y2="107.0" stroke="#8a8a8a" stroke-width="1" /><rect x="470.3" y="97.5" width="1" height="1" fill="#3c3c3c"/><rect x="470.3" y="112.5" width="1" height="1" fill="#3c3c3c"/><line x1="483.18" y1="104.0" x2="483.18" y2="107.0" stroke="#8a8a8a" stroke-width="1" /><rect x="482.7" y="97.5" width="1" height="1" fill="#3c3c3c"/><rect x="482.7" y="112.5" width="1" height="1" fill="#3c3c3c"/><line x1="495.53999999999996" y1="104.0" x2="495.53999999999996" y2="107.0" stroke="#8a8a8a" stroke-width="1" /><rect x="495.0" y="97.5" width="1" height="1" fill="#3c3c3c"/><rect x="495.0" y="112.5" width="1" height="1" fill="#3c3c3c"/><line x1="507.9" y1="97.5" x2="507.9" y2="113.5" stroke="#2a2a2a" stroke-width="1" /><line x1="507.9" y1="103.5" x2="507.9" y2="107.5" stroke="#9a9a9a" stroke-width="1" /><rect x="507.4" y="97.5" width="1" height="1" fill="#3c3c3c"/><rect x="507.4" y="112.5" width="1" height="1" fill="#3c3c3c"/><line x1="520.26" y1="104.0" x2="520.26" y2="107.0" stroke="#8a8a8a" stroke-width="1" /><rect x="519.8" y="97.5" width="1" height="1" fill="#3c3c3c"/><rect x="519.8" y="112.5" width="1" height="1" fill="#3c3c3c"/><line x1="532.62" y1="104.0" x2="532.62" y2="107.0" stroke="#8a8a8a" stroke-width="1" /><rect x="532.1" y="97.5" width="1" height="1" fill="#3c3c3c"/><rect x="532.1" y="112.5" width="1" height="1" fill="#3c3c3c"/><line x1="544.98" y1="104.0" x2="544.98" y2="107.0" stroke="#8a8a8a" stroke-width="1" /><rect x="544.5" y="97.5" width="1" height="1" fill="#3c3c3c"/><rect x="544.5" y="112.5" width="1" height="1" fill="#3c3c3c"/><line x1="557.3399999999999" y1="104.0" x2="557.3399999999999" y2="107.0" stroke="#8a8a8a" stroke-width="1" /><rect x="556.8" y="97.5" width="1" height="1" fill="#3c3c3c"/><rect x="556.8" y="112.5" width="1" height="1" fill="#3c3c3c"/><line x1="569.7" y1="97.5" x2="569.7" y2="113.5" stroke="#2a2a2a" stroke-width="1" /><line x1="569.7" y1="103.5" x2="569.7" y2="107.5" stroke="#9a9a9a" stroke-width="1" /><rect x="569.2" y="97.5" width="1" height="1" fill="#3c3c3c"/><rect x="569.2" y="112.5" width="1" height="1" fill="#3c3c3c"/><line x1="582.06" y1="104.0" x2="582.06" y2="107.0" stroke="#8a8a8a" stroke-width="1" /><rect x="581.6" y="97.5" width="1" height="1" fill="#3c3c3c"/><rect x="581.6" y="112.5" width="1" height="1" fill="#3c3c3c"/><line x1="594.42" y1="104.0" x2="594.42" y2="107.0" stroke="#8a8a8a" stroke-width="1" /><rect x="593.9" y="97.5" width="1" height="1" fill="#3c3c3c"/><rect x="593.9" y="112.5" width="1" height="1" fill="#3c3c3c"/><line x1="606.78" y1="104.0" x2="606.78" y2="107.0" stroke="#8a8a8a" stroke-width="1" /><rect x="606.3" y="97.5" width="1" height="1" fill="#3c3c3c"/><rect x="606.3" y="112.5" width="1" height="1" fill="#3c3c3c"/><line x1="619.14" y1="104.0" x2="619.14" y2="107.0" stroke="#8a8a8a" stroke-width="1" /><rect x="618.6" y="97.5" width="1" height="1" fill="#3c3c3c"/><rect x="618.6" y="112.5" width="1" height="1" fill="#3c3c3c"/><rect x="13.5" y="126.5" width="618.0" height="22" fill="none" stroke="#8a8a90" stroke-width="1" rx="0" /><line x1="13.5" y1="137.5" x2="631.5" y2="137.5" stroke="#6a6a6a" stroke-width="1" /><line x1="322.5" y1="126.5" x2="322.5" y2="148.5" stroke="#707070" stroke-width="1" /><line x1="25.86" y1="136.0" x2="25.86" y2="139.0" stroke="#8a8a8a" stroke-width="1" /><rect x="25.4" y="129.5" width="1" height="1" fill="#3c3c3c"/><rect x="25.4" y="144.5" width="1" height="1" fill="#3c3c3c"/><line x1="38.22" y1="136.0" x2="38.22" y2="139.0" stroke="#8a8a8a" stroke-width="1" /><rect x="37.7" y="129.5" width="1" height="1" fill="#3c3c3c"/><rect x="37.7" y="144.5" width="1" height="1" fill="#3c3c3c"/><line x1="50.58" y1="136.0" x2="50.58" y2="139.0" stroke="#8a8a8a" stroke-width="1" /><rect x="50.1" y="129.5" width="1" height="1" fill="#3c3c3c"/><rect x="50.1" y="144.5" width="1" height="1" fill="#3c3c3c"/><line x1="62.94" y1="136.0" x2="62.94" y2="139.0" stroke="#8a8a8a" stroke-width="1" /><rect x="62.4" y="129.5" width="1" height="1" fill="#3c3c3c"/><rect x="62.4" y="144.5" width="1" height="1" fill="#3c3c3c"/><line x1="75.3" y1="129.5" x2="75.3" y2="145.5" stroke="#2a2a2a" stroke-width="1" /><line x1="75.3" y1="135.5" x2="75.3" y2="139.5" stroke="#9a9a9a" stroke-width="1" /><rect x="74.8" y="129.5" width="1" height="1" fill="#3c3c3c"/><rect x="74.8" y="144.5" width="1" height="1" fill="#3c3c3c"/><line x1="87.66" y1="136.0" x2="87.66" y2="139.0" stroke="#8a8a8a" stroke-width="1" /><rect x="87.2" y="129.5" width="1" height="1" fill="#3c3c3c"/><rect x="87.2" y="144.5" width="1" height="1" fill="#3c3c3c"/><line x1="100.02" y1="136.0" x2="100.02" y2="139.0" stroke="#8a8a8a" stroke-width="1" /><rect x="99.5" y="129.5" width="1" height="1" fill="#3c3c3c"/><rect x="99.5" y="144.5" width="1" height="1" fill="#3c3c3c"/><line x1="112.38" y1="136.0" x2="112.38" y2="139.0" stroke="#8a8a8a" stroke-width="1" /><rect x="111.9" y="129.5" width="1" height="1" fill="#3c3c3c"/><rect x="111.9" y="144.5" width="1" height="1" fill="#3c3c3c"/><line x1="124.73999999999998" y1="136.0" x2="124.73999999999998" y2="139.0" stroke="#8a8a8a" stroke-width="1" /><rect x="124.2" y="129.5" width="1" height="1" fill="#3c3c3c"/><rect x="124.2" y="144.5" width="1" height="1" fill="#3c3c3c"/><line x1="137.1" y1="129.5" x2="137.1" y2="145.5" stroke="#2a2a2a" stroke-width="1" /><line x1="137.1" y1="135.5" x2="137.1" y2="139.5" stroke="#9a9a9a" stroke-width="1" /><rect x="136.6" y="129.5" width="1" height="1" fill="#3c3c3c"/><rect x="136.6" y="144.5" width="1" height="1" fill="#3c3c3c"/><line x1="149.45999999999998" y1="136.0" x2="149.45999999999998" y2="139.0" stroke="#8a8a8a" stroke-width="1" /><rect x="149.0" y="129.5" width="1" height="1" fill="#3c3c3c"/><rect x="149.0" y="144.5" width="1" height="1" fill="#3c3c3c"/><line x1="161.82" y1="136.0" x2="161.82" y2="139.0" stroke="#8a8a8a" stroke-width="1" /><rect x="161.3" y="129.5" width="1" height="1" fill="#3c3c3c"/><rect x="161.3" y="144.5" width="1" height="1" fill="#3c3c3c"/><line x1="174.18" y1="136.0" x2="174.18" y2="139.0" stroke="#8a8a8a" stroke-width="1" /><rect x="173.7" y="129.5" width="1" height="1" fill="#3c3c3c"/><rect x="173.7" y="144.5" width="1" height="1" fill="#3c3c3c"/><line x1="186.54" y1="136.0" x2="186.54" y2="139.0" stroke="#8a8a8a" stroke-width="1" /><rect x="186.0" y="129.5" width="1" height="1" fill="#3c3c3c"/><rect x="186.0" y="144.5" width="1" height="1" fill="#3c3c3c"/><line x1="198.9" y1="129.5" x2="198.9" y2="145.5" stroke="#2a2a2a" stroke-width="1" /><line x1="198.9" y1="135.5" x2="198.9" y2="139.5" stroke="#9a9a9a" stroke-width="1" /><rect x="198.4" y="129.5" width="1" height="1" fill="#3c3c3c"/><rect x="198.4" y="144.5" width="1" height="1" fill="#3c3c3c"/><line x1="211.26" y1="136.0" x2="211.26" y2="139.0" stroke="#8a8a8a" stroke-width="1" /><rect x="210.8" y="129.5" width="1" height="1" fill="#3c3c3c"/><rect x="210.8" y="144.5" width="1" height="1" fill="#3c3c3c"/><line x1="223.61999999999998" y1="136.0" x2="223.61999999999998" y2="139.0" stroke="#8a8a8a" stroke-width="1" /><rect x="223.1" y="129.5" width="1" height="1" fill="#3c3c3c"/><rect x="223.1" y="144.5" width="1" height="1" fill="#3c3c3c"/><line x1="235.97999999999996" y1="136.0" x2="235.97999999999996" y2="139.0" stroke="#8a8a8a" stroke-width="1" /><rect x="235.5" y="129.5" width="1" height="1" fill="#3c3c3c"/><rect x="235.5" y="144.5" width="1" height="1" fill="#3c3c3c"/><line x1="248.34" y1="136.0" x2="248.34" y2="139.0" stroke="#8a8a8a" stroke-width="1" /><rect x="247.8" y="129.5" width="1" height="1" fill="#3c3c3c"/><rect x="247.8" y="144.5" width="1" height="1" fill="#3c3c3c"/><line x1="260.7" y1="129.5" x2="260.7" y2="145.5" stroke="#2a2a2a" stroke-width="1" /><line x1="260.7" y1="135.5" x2="260.7" y2="139.5" stroke="#9a9a9a" stroke-width="1" /><rect x="260.2" y="129.5" width="1" height="1" fill="#3c3c3c"/><rect x="260.2" y="144.5" width="1" height="1" fill="#3c3c3c"/><line x1="273.06" y1="136.0" x2="273.06" y2="139.0" stroke="#8a8a8a" stroke-width="1" /><rect x="272.6" y="129.5" width="1" height="1" fill="#3c3c3c"/><rect x="272.6" y="144.5" width="1" height="1" fill="#3c3c3c"/><line x1="285.41999999999996" y1="136.0" x2="285.41999999999996" y2="139.0" stroke="#8a8a8a" stroke-width="1" /><rect x="284.9" y="129.5" width="1" height="1" fill="#3c3c3c"/><rect x="284.9" y="144.5" width="1" height="1" fill="#3c3c3c"/><line x1="297.78" y1="136.0" x2="297.78" y2="139.0" stroke="#8a8a8a" stroke-width="1" /><rect x="297.3" y="129.5" width="1" height="1" fill="#3c3c3c"/><rect x="297.3" y="144.5" width="1" height="1" fill="#3c3c3c"/><line x1="310.14" y1="136.0" x2="310.14" y2="139.0" stroke="#8a8a8a" stroke-width="1" /><rect x="309.6" y="129.5" width="1" height="1" fill="#3c3c3c"/><rect x="309.6" y="144.5" width="1" height="1" fill="#3c3c3c"/><line x1="334.86" y1="136.0" x2="334.86" y2="139.0" stroke="#8a8a8a" stroke-width="1" /><rect x="334.4" y="129.5" width="1" height="1" fill="#3c3c3c"/><rect x="334.4" y="144.5" width="1" height="1" fill="#3c3c3c"/><line x1="347.21999999999997" y1="136.0" x2="347.21999999999997" y2="139.0" stroke="#8a8a8a" stroke-width="1" /><rect x="346.7" y="129.5" width="1" height="1" fill="#3c3c3c"/><rect x="346.7" y="144.5" width="1" height="1" fill="#3c3c3c"/><line x1="359.58" y1="136.0" x2="359.58" y2="139.0" stroke="#8a8a8a" stroke-width="1" /><rect x="359.1" y="129.5" width="1" height="1" fill="#3c3c3c"/><rect x="359.1" y="144.5" width="1" height="1" fill="#3c3c3c"/><line x1="371.93999999999994" y1="136.0" x2="371.93999999999994" y2="139.0" stroke="#8a8a8a" stroke-width="1" /><rect x="371.4" y="129.5" width="1" height="1" fill="#3c3c3c"/><rect x="371.4" y="144.5" width="1" height="1" fill="#3c3c3c"/><line x1="384.3" y1="129.5" x2="384.3" y2="145.5" stroke="#2a2a2a" stroke-width="1" /><line x1="384.3" y1="135.5" x2="384.3" y2="139.5" stroke="#9a9a9a" stroke-width="1" /><rect x="383.8" y="129.5" width="1" height="1" fill="#3c3c3c"/><rect x="383.8" y="144.5" width="1" height="1" fill="#3c3c3c"/><line x1="396.65999999999997" y1="136.0" x2="396.65999999999997" y2="139.0" stroke="#8a8a8a" stroke-width="1" /><rect x="396.2" y="129.5" width="1" height="1" fill="#3c3c3c"/><rect x="396.2" y="144.5" width="1" height="1" fill="#3c3c3c"/><line x1="409.02" y1="136.0" x2="409.02" y2="139.0" stroke="#8a8a8a" stroke-width="1" /><rect x="408.5" y="129.5" width="1" height="1" fill="#3c3c3c"/><rect x="408.5" y="144.5" width="1" height="1" fill="#3c3c3c"/><line x1="421.38" y1="136.0" x2="421.38" y2="139.0" stroke="#8a8a8a" stroke-width="1" /><rect x="420.9" y="129.5" width="1" height="1" fill="#3c3c3c"/><rect x="420.9" y="144.5" width="1" height="1" fill="#3c3c3c"/><line x1="433.73999999999995" y1="136.0" x2="433.73999999999995" y2="139.0" stroke="#8a8a8a" stroke-width="1" /><rect x="433.2" y="129.5" width="1" height="1" fill="#3c3c3c"/><rect x="433.2" y="144.5" width="1" height="1" fill="#3c3c3c"/><line x1="446.1" y1="129.5" x2="446.1" y2="145.5" stroke="#2a2a2a" stroke-width="1" /><line x1="446.1" y1="135.5" x2="446.1" y2="139.5" stroke="#9a9a9a" stroke-width="1" /><rect x="445.6" y="129.5" width="1" height="1" fill="#3c3c3c"/><rect x="445.6" y="144.5" width="1" height="1" fill="#3c3c3c"/><line x1="458.4599999999999" y1="136.0" x2="458.4599999999999" y2="139.0" stroke="#8a8a8a" stroke-width="1" /><rect x="458.0" y="129.5" width="1" height="1" fill="#3c3c3c"/><rect x="458.0" y="144.5" width="1" height="1" fill="#3c3c3c"/><line x1="470.82" y1="136.0" x2="470.82" y2="139.0" stroke="#8a8a8a" stroke-width="1" /><rect x="470.3" y="129.5" width="1" height="1" fill="#3c3c3c"/><rect x="470.3" y="144.5" width="1" height="1" fill="#3c3c3c"/><line x1="483.18" y1="136.0" x2="483.18" y2="139.0" stroke="#8a8a8a" stroke-width="1" /><rect x="482.7" y="129.5" width="1" height="1" fill="#3c3c3c"/><rect x="482.7" y="144.5" width="1" height="1" fill="#3c3c3c"/><line x1="495.53999999999996" y1="136.0" x2="495.53999999999996" y2="139.0" stroke="#8a8a8a" stroke-width="1" /><rect x="495.0" y="129.5" width="1" height="1" fill="#3c3c3c"/><rect x="495.0" y="144.5" width="1" height="1" fill="#3c3c3c"/><line x1="507.9" y1="129.5" x2="507.9" y2="145.5" stroke="#2a2a2a" stroke-width="1" /><line x1="507.9" y1="135.5" x2="507.9" y2="139.5" stroke="#9a9a9a" stroke-width="1" /><rect x="507.4" y="129.5" width="1" height="1" fill="#3c3c3c"/><rect x="507.4" y="144.5" width="1" height="1" fill="#3c3c3c"/><line x1="520.26" y1="136.0" x2="520.26" y2="139.0" stroke="#8a8a8a" stroke-width="1" /><rect x="519.8" y="129.5" width="1" height="1" fill="#3c3c3c"/><rect x="519.8" y="144.5" width="1" height="1" fill="#3c3c3c"/><line x1="532.62" y1="136.0" x2="532.62" y2="139.0" stroke="#8a8a8a" stroke-width="1" /><rect x="532.1" y="129.5" width="1" height="1" fill="#3c3c3c"/><rect x="532.1" y="144.5" width="1" height="1" fill="#3c3c3c"/><line x1="544.98" y1="136.0" x2="544.98" y2="139.0" stroke="#8a8a8a" stroke-width="1" /><rect x="544.5" y="129.5" width="1" height="1" fill="#3c3c3c"/><rect x="544.5" y="144.5" width="1" height="1" fill="#3c3c3c"/><line x1="557.3399999999999" y1="136.0" x2="557.3399999999999" y2="139.0" stroke="#8a8a8a" stroke-width="1" /><rect x="556.8" y="129.5" width="1" height="1" fill="#3c3c3c"/><rect x="556.8" y="144.5" width="1" height="1" fill="#3c3c3c"/><line x1="569.7" y1="129.5" x2="569.7" y2="145.5" stroke="#2a2a2a" stroke-width="1" /><line x1="569.7" y1="135.5" x2="569.7" y2="139.5" stroke="#9a9a9a" stroke-width="1" /><rect x="569.2" y="129.5" width="1" height="1" fill="#3c3c3c"/><rect x="569.2" y="144.5" width="1" height="1" fill="#3c3c3c"/><line x1="582.06" y1="136.0" x2="582.06" y2="139.0" stroke="#8a8a8a" stroke-width="1" /><rect x="581.6" y="129.5" width="1" height="1" fill="#3c3c3c"/><rect x="581.6" y="144.5" width="1" height="1" fill="#3c3c3c"/><line x1="594.42" y1="136.0" x2="594.42" y2="139.0" stroke="#8a8a8a" stroke-width="1" /><rect x="593.9" y="129.5" width="1" height="1" fill="#3c3c3c"/><rect x="593.9" y="144.5" width="1" height="1" fill="#3c3c3c"/><line x1="606.78" y1="136.0" x2="606.78" y2="139.0" stroke="#8a8a8a" stroke-width="1" /><rect x="606.3" y="129.5" width="1" height="1" fill="#3c3c3c"/><rect x="606.3" y="144.5" width="1" height="1" fill="#3c3c3c"/><line x1="619.14" y1="136.0" x2="619.14" y2="139.0" stroke="#8a8a8a" stroke-width="1" /><rect x="618.6" y="129.5" width="1" height="1" fill="#3c3c3c"/><rect x="618.6" y="144.5" width="1" height="1" fill="#3c3c3c"/><g clip-path="url(#gclip0)"><path d="M14.0,32.5 L17.4,32.5 L18.0,47.5 L18.6,32.5 L22.0,32.5 L22.6,47.5 L23.2,32.5 L26.6,32.5 L27.2,47.5 L27.8,32.5 L31.2,32.5 L31.8,47.5 L32.4,32.5 L35.8,32.5 L36.4,47.5 L37.0,32.5 L41.0,32.5 L41.0,47.5 L45.8,47.5 L46.5,32.5 L47.2,47.5 L52.0,47.5 L52.7,32.5 L53.4,47.5 L58.2,47.5 L58.9,32.5 L59.6,47.5 L64.4,47.5 L65.1,32.5 L65.8,47.5 L70.6,47.5 L71.3,32.5 L72.0,47.5 L76.8,47.5 L77.5,32.5 L78.2,47.5 L83.0,47.5 L83.7,32.5 L84.4,47.5 L89.2,47.5 L89.9,32.5 L90.6,47.5 L95.4,47.5 L96.1,32.5 L96.8,47.5 L101.6,47.5 L102.3,32.5 L103.0,47.5 L108.0,47.5 L108.0,32.5 L111.0,32.5 L111.0,47.5 L114.0,47.5 L114.0,32.5 L114.0,32.5 L114.0,40.0 L116.7,45.0 L119.4,46.7 L122.1,47.2 L124.8,47.4 L127.5,47.5 L130.2,47.5 L133.0,47.5 L135.7,47.5 L138.4,47.5 L141.1,47.5 L143.8,47.5 L146.5,47.5 L149.2,47.5 L151.9,47.5 L154.6,47.5 L157.3,47.5 L160.0,47.5 L162.8,47.5 L165.5,47.5 L168.2,47.5 L170.9,47.5 L173.6,47.5 L176.3,47.5 L179.0,47.5" fill="none" stroke="#ff0fae" stroke-width="1.15" /><path d="M251.0,32.5 L252.5,32.5 L252.5,47.5 L254.0,47.5 L254.0,32.5 L255.5,32.5 L255.5,47.5 L257.0,47.5 L257.0,32.5 L258.5,32.5 L258.5,47.5 L260.0,47.5 L260.0,32.5 L261.5,32.5 L261.5,47.5 L263.0,47.5 L263.0,32.5 L264.5,32.5 L264.5,47.5 L266.0,47.5 L266.0,32.5 L267.5,32.5 L267.5,47.5 L269.0,47.5 L269.0,32.5 L270.5,32.5 L270.5,47.5 L272.0,47.5 L272.0,32.5 L273.5,32.5 L273.5,47.5 L275.0,47.5 L275.0,32.5 L276.5,32.5 L276.5,47.5 L278.0,47.5 L278.0,32.5 L279.5,32.5 L279.5,47.5 L281.0,47.5 L281.0,32.5 L282.5,32.5 L282.5,47.5 L284.0,47.5 L284.0,32.5 L285.5,32.5 L285.5,47.5 L287.0,47.5 L287.0,32.5 L288.5,32.5 L288.5,47.5 L290.0,47.5 L290.0,32.5 L291.5,32.5 L291.5,47.5 L293.0,47.5 L293.0,32.5 L294.5,32.5 L294.5,47.5 L296.0,47.5 L296.0,32.5 L296.0,32.5 L296.0,32.5 L299.1,32.5 L299.1,47.5 L302.2,47.5 L302.2,32.5 L305.3,32.5 L305.3,47.5 L308.4,47.5 L308.4,32.5 L311.5,32.5 L311.5,47.5 L314.6,47.5 L314.6,32.5 L317.7,32.5 L317.7,47.5 L320.8,47.5 L320.8,32.5 L323.9,32.5 L323.9,47.5 L327.0,47.5 L327.0,32.5 L330.0,32.5 L330.0,32.5 L334.4,32.5 L334.4,47.5 L338.7,47.5 L338.7,32.5 L343.1,32.5 L343.1,47.5 L347.4,47.5 L347.4,32.5 L351.8,32.5 L351.8,47.5 L356.1,47.5 L356.1,32.5 L360.5,32.5 L360.5,47.5 L364.8,47.5 L364.8,32.5 L369.2,32.5 L369.2,47.5 L373.5,47.5 L373.5,32.5 L377.9,32.5 L377.9,47.5 L382.2,47.5 L382.2,32.5 L386.6,32.5 L386.6,47.5 L390.9,47.5 L390.9,32.5 L395.3,32.5 L395.3,47.5 L399.6,47.5 L399.6,32.5 L404.0,32.5 L404.0,47.5 L408.3,47.5 L408.3,32.5 L410.0,32.5 L410.0,32.5 L413.6,32.5 L414.2,47.5 L414.8,32.5 L418.4,32.5 L419.0,47.5 L419.6,32.5 L423.2,32.5 L423.8,47.5 L424.4,32.5 L428.0,32.5 L428.6,47.5 L429.2,32.5 L432.8,32.5 L433.4,47.5 L434.0,32.5 L437.6,32.5 L438.2,47.5 L438.8,32.5 L442.4,32.5 L443.0,47.5 L443.6,32.5 L447.0,32.5 L447.0,47.5 L451.8,47.5 L452.5,32.5 L453.2,47.5 L458.0,47.5 L458.7,32.5 L459.4,47.5 L464.2,47.5 L464.9,32.5 L465.6,47.5 L470.4,47.5 L471.1,32.5 L471.8,47.5 L476.6,47.5 L477.3,32.5 L478.0,47.5 L482.8,47.5 L483.5,32.5 L484.2,47.5 L489.0,47.5 L489.7,32.5 L490.4,47.5 L495.2,47.5 L495.9,32.5 L496.6,47.5 L501.4,47.5 L502.1,32.5 L502.8,47.5 L507.6,47.5 L508.3,32.5 L509.0,47.5 L512.0,47.5 L512.0,32.5 L515.0,32.5 L515.0,47.5 L517.0,47.5 L517.0,40.0 L519.7,45.0 L522.4,46.7 L525.1,47.2 L527.8,47.4 L530.5,47.5 L533.2,47.5 L536.0,47.5 L538.7,47.5 L541.4,47.5 L544.1,47.5 L546.8,47.5 L549.5,47.5 L552.2,47.5 L554.9,47.5 L557.6,47.5 L560.3,47.5 L563.0,47.5 L565.8,47.5 L568.5,47.5 L571.2,47.5 L573.9,47.5 L576.6,47.5 L579.3,47.5 L582.0,47.5" fill="none" stroke="#ff0fae" stroke-width="1.15" /><path d="M179.0,46.8 L179.0,38.0 L180.5,36.2 L182.0,36.6 L183.5,35.0 L185.0,35.4 L187.0,34.2 L189.0,34.4 L189.0,33.7 L190.5,34.5 L193.0,33.6 L194.6,33.5 L196.4,33.6 L198.6,33.3 L200.8,33.6 L202.8,33.2 L204.5,34.1 L206.7,33.4 L208.4,33.3 L211.1,34.2 L212.6,33.7 L215.4,33.7 L217.1,33.2 L220.0,33.9 L222.6,34.2 L224.9,33.8 L226.7,33.9 L228.9,34.3 L231.8,33.9 L234.1,34.2 L235.9,34.1 L237.7,33.3 L240.5,34.1 L243.3,33.7 L245.3,33.3 L246.9,33.4 L249.4,33.3 L251.0,34.0 L251.0,47.5 L249.1,47.4 L246.6,47.6 L244.0,46.8 L242.1,47.4 L239.9,47.6 L238.1,47.2 L235.1,47.7 L233.3,47.5 L231.0,47.0 L228.8,47.5 L226.6,47.7 L223.7,47.3 L221.7,47.3 L219.3,46.9 L217.0,47.0 L214.5,47.0 L212.7,47.5 L210.7,47.0 L208.0,47.3 L206.1,46.6 L203.9,47.4 L201.4,47.6 L199.3,46.6 L197.8,47.8 L196.1,47.3 L193.5,46.7 L190.6,46.7 L187.9,46.8 L185.6,47.3 L183.8,46.6 L181.5,47.6 L179.0,46.8 Z" fill="#ff0fae"/><rect x="200.5" y="35.0" width="1.3" height="11.799999999999997" fill="#000" opacity="0.7"/><rect x="204.5" y="35.0" width="1.3" height="11.799999999999997" fill="#000" opacity="0.7"/><rect x="198.8" y="33.8" width="0.8" height="2.5" fill="#000" opacity="0.35"/><rect x="212.4" y="33.8" width="0.8" height="2.5" fill="#000" opacity="0.35"/><rect x="223.9" y="44.8" width="0.8" height="2.5" fill="#000" opacity="0.35"/><rect x="231.6" y="33.8" width="0.8" height="2.5" fill="#000" opacity="0.35"/><rect x="241.1" y="33.8" width="0.8" height="2.5" fill="#000" opacity="0.35"/><rect x="252.1" y="44.8" width="0.8" height="2.5" fill="#000" opacity="0.35"/><path d="M581.5,46.8 L581.5,38.0 L583.0,36.2 L584.5,36.6 L586.0,35.0 L587.5,35.4 L589.5,34.2 L591.5,34.4 L591.5,33.9 L594.1,33.8 L596.2,33.7 L598.3,34.3 L600.5,34.2 L602.2,33.9 L605.1,33.5 L607.8,34.0 L610.1,33.9 L613.0,33.4 L615.5,33.4 L618.3,33.4 L620.3,33.6 L622.7,33.8 L625.3,33.7 L627.8,33.2 L630.2,34.2 L631.0,34.0 L631.0,47.5 L629.2,47.4 L626.2,47.8 L623.3,47.7 L620.8,47.0 L618.8,47.1 L615.9,47.0 L613.3,47.6 L610.8,47.1 L608.0,47.6 L606.0,47.5 L603.0,47.3 L601.1,46.9 L599.2,47.5 L597.3,47.6 L595.8,47.6 L592.8,47.7 L590.7,47.4 L588.2,47.0 L586.6,47.4 L583.7,46.9 L581.5,46.8 Z" fill="#ff0fae"/><rect x="600.8" y="35.0" width="1.3" height="11.799999999999997" fill="#000" opacity="0.7"/><rect x="605.3" y="35.0" width="1.3" height="11.799999999999997" fill="#000" opacity="0.7"/><rect x="596.3" y="33.8" width="0.8" height="2.5" fill="#000" opacity="0.35"/><rect x="604.7" y="44.8" width="0.8" height="2.5" fill="#000" opacity="0.35"/><rect x="612.1" y="44.8" width="0.8" height="2.5" fill="#000" opacity="0.35"/><rect x="625.8" y="33.8" width="0.8" height="2.5" fill="#000" opacity="0.35"/><rect x="635.9" y="44.8" width="0.8" height="2.5" fill="#000" opacity="0.35"/></g><g clip-path="url(#gclip1)"><path d="M14.0,81.0 L17.5,81.0 L18.1,66.0 L18.7,81.0 L22.2,81.0 L22.8,66.0 L23.4,81.0 L26.9,81.0 L27.5,66.0 L28.1,81.0 L31.6,81.0 L32.2,66.0 L32.8,81.0 L36.3,81.0 L36.9,66.0 L37.5,81.0 L41.0,81.0 L41.6,66.0 L42.2,81.0 L44.0,81.0 L44.0,66.0 L48.9,66.0 L49.6,81.0 L50.3,66.0 L55.2,66.0 L55.9,81.0 L56.6,66.0 L61.5,66.0 L62.2,81.0 L62.9,66.0 L67.8,66.0 L68.5,81.0 L69.2,66.0 L74.1,66.0 L74.8,81.0 L75.5,66.0 L80.4,66.0 L81.1,81.0 L81.8,66.0 L86.7,66.0 L87.4,81.0 L88.1,66.0 L93.0,66.0 L93.7,81.0 L94.4,66.0 L99.3,66.0 L100.0,81.0 L100.7,66.0 L106.0,66.0 L106.0,66.0 L109.0,66.0 L109.0,81.0 L112.0,81.0 L112.0,66.0 L112.0,66.0 L112.0,73.5 L114.8,78.5 L117.6,80.2 L120.4,80.7 L123.2,80.9 L126.0,81.0 L128.8,81.0 L131.5,81.0 L134.3,81.0 L137.1,81.0 L139.9,81.0 L142.7,81.0 L145.5,81.0 L148.3,81.0 L151.1,81.0 L153.9,81.0 L156.7,81.0 L159.5,81.0 L162.2,81.0 L165.0,81.0 L167.8,81.0 L170.6,81.0 L173.4,81.0 L176.2,81.0 L179.0,81.0" fill="none" stroke="#16e6f2" stroke-width="1.15" /><path d="M251.0,66.0 L252.5,66.0 L252.5,81.0 L254.0,81.0 L254.0,66.0 L255.5,66.0 L255.5,81.0 L257.0,81.0 L257.0,66.0 L258.5,66.0 L258.5,81.0 L260.0,81.0 L260.0,66.0 L261.5,66.0 L261.5,81.0 L263.0,81.0 L263.0,66.0 L264.5,66.0 L264.5,81.0 L266.0,81.0 L266.0,66.0 L267.5,66.0 L267.5,81.0 L269.0,81.0 L269.0,66.0 L270.5,66.0 L270.5,81.0 L272.0,81.0 L272.0,66.0 L273.5,66.0 L273.5,81.0 L275.0,81.0 L275.0,66.0 L276.5,66.0 L276.5,81.0 L278.0,81.0 L278.0,66.0 L279.5,66.0 L279.5,81.0 L281.0,81.0 L281.0,66.0 L282.5,66.0 L282.5,81.0 L284.0,81.0 L284.0,66.0 L285.5,66.0 L285.5,81.0 L287.0,81.0 L287.0,66.0 L288.5,66.0 L288.5,81.0 L290.0,81.0 L290.0,66.0 L291.5,66.0 L291.5,81.0 L293.0,81.0 L293.0,66.0 L294.5,66.0 L294.5,81.0 L296.0,81.0 L296.0,66.0 L296.0,66.0 L296.0,66.0 L299.1,66.0 L299.1,81.0 L302.2,81.0 L302.2,66.0 L305.3,66.0 L305.3,81.0 L308.4,81.0 L308.4,66.0 L311.5,66.0 L311.5,81.0 L314.6,81.0 L314.6,66.0 L317.7,66.0 L317.7,81.0 L320.8,81.0 L320.8,66.0 L323.9,66.0 L323.9,81.0 L327.0,81.0 L327.0,66.0 L330.0,66.0 L330.0,66.0 L334.4,66.0 L334.4,81.0 L338.7,81.0 L338.7,66.0 L343.1,66.0 L343.1,81.0 L347.4,81.0 L347.4,66.0 L351.8,66.0 L351.8,81.0 L356.1,81.0 L356.1,66.0 L360.5,66.0 L360.5,81.0 L364.8,81.0 L364.8,66.0 L369.2,66.0 L369.2,81.0 L373.5,81.0 L373.5,66.0 L377.9,66.0 L377.9,81.0 L382.2,81.0 L382.2,66.0 L386.6,66.0 L386.6,81.0 L390.9,81.0 L390.9,66.0 L395.3,66.0 L395.3,81.0 L399.6,81.0 L399.6,66.0 L404.0,66.0 L404.0,81.0 L406.0,81.0 L406.0,81.0 L409.6,81.0 L410.2,66.0 L410.8,81.0 L414.4,81.0 L415.0,66.0 L415.6,81.0 L419.2,81.0 L419.8,66.0 L420.4,81.0 L424.0,81.0 L424.6,66.0 L425.2,81.0 L428.8,81.0 L429.4,66.0 L430.0,81.0 L433.6,81.0 L434.2,66.0 L434.8,81.0 L438.4,81.0 L439.0,66.0 L439.6,81.0 L443.2,81.0 L443.8,66.0 L444.4,81.0 L447.0,81.0 L447.0,66.0 L451.9,66.0 L452.6,81.0 L453.3,66.0 L458.2,66.0 L458.9,81.0 L459.6,66.0 L464.5,66.0 L465.2,81.0 L465.9,66.0 L470.8,66.0 L471.5,81.0 L472.2,66.0 L477.1,66.0 L477.8,81.0 L478.5,66.0 L483.4,66.0 L484.1,81.0 L484.8,66.0 L489.7,66.0 L490.4,81.0 L491.1,66.0 L496.0,66.0 L496.7,81.0 L497.4,66.0 L502.3,66.0 L503.0,81.0 L503.7,66.0 L505.0,66.0 L505.0,66.0 L508.0,66.0 L508.0,81.0 L510.0,81.0 L510.0,73.5 L513.0,78.5 L515.9,80.2 L518.9,80.7 L521.8,80.9 L524.8,81.0 L527.8,81.0 L530.7,81.0 L533.7,81.0 L536.6,81.0 L539.6,81.0 L542.5,81.0 L545.5,81.0 L548.5,81.0 L551.4,81.0 L554.4,81.0 L557.3,81.0 L560.3,81.0 L563.2,81.0 L566.2,81.0 L569.2,81.0 L572.1,81.0 L575.1,81.0 L578.0,81.0 L581.0,81.0" fill="none" stroke="#16e6f2" stroke-width="1.15" /><path d="M179.0,81.3 L179.0,72.5 L180.5,70.7 L182.0,71.1 L183.5,69.5 L185.0,69.9 L187.0,68.7 L189.0,68.9 L189.0,67.9 L191.3,68.8 L193.9,67.7 L195.7,67.7 L197.2,68.2 L199.5,67.8 L202.2,68.0 L204.0,67.8 L206.6,68.3 L209.0,68.3 L211.1,68.1 L213.2,68.2 L215.7,67.8 L217.7,68.9 L219.3,67.9 L221.1,67.7 L223.5,68.3 L226.2,68.4 L228.8,68.9 L230.5,68.8 L233.5,67.9 L235.3,68.3 L237.3,68.6 L240.1,68.2 L241.6,68.5 L243.5,69.0 L245.5,68.4 L247.8,68.7 L249.4,67.7 L251.0,68.5 L251.0,81.4 L248.0,82.2 L245.3,81.8 L243.2,82.0 L241.0,81.4 L238.0,82.2 L235.8,81.7 L232.9,81.6 L230.9,82.0 L229.1,82.1 L227.4,81.1 L225.2,81.7 L223.6,82.1 L221.2,81.5 L219.4,82.1 L217.1,81.3 L214.5,81.3 L211.6,81.6 L208.8,82.2 L207.1,82.0 L205.1,82.2 L202.2,81.2 L200.4,81.8 L198.1,81.5 L195.9,81.4 L193.9,82.2 L191.0,82.1 L189.4,82.2 L187.8,81.1 L185.1,81.7 L182.5,81.4 L179.0,81.3 Z" fill="#16e6f2"/><rect x="200.5" y="69.5" width="1.3" height="11.799999999999997" fill="#000" opacity="0.7"/><rect x="204.5" y="69.5" width="1.3" height="11.799999999999997" fill="#000" opacity="0.7"/><rect x="198.0" y="79.3" width="0.8" height="2.5" fill="#000" opacity="0.35"/><rect x="207.2" y="68.3" width="0.8" height="2.5" fill="#000" opacity="0.35"/><rect x="216.9" y="79.3" width="0.8" height="2.5" fill="#000" opacity="0.35"/><rect x="230.1" y="79.3" width="0.8" height="2.5" fill="#000" opacity="0.35"/><rect x="241.4" y="79.3" width="0.8" height="2.5" fill="#000" opacity="0.35"/><rect x="251.0" y="68.3" width="0.8" height="2.5" fill="#000" opacity="0.35"/><path d="M581.5,81.3 L581.5,72.5 L583.0,70.7 L584.5,71.1 L586.0,69.5 L587.5,69.9 L589.5,68.7 L591.5,68.9 L591.5,68.4 L593.2,69.1 L596.1,68.7 L598.1,68.9 L600.3,68.4 L602.6,68.8 L605.3,68.3 L606.9,67.8 L608.9,68.9 L611.6,68.5 L613.8,68.6 L615.5,69.1 L618.2,68.2 L620.5,68.2 L622.5,67.8 L624.0,67.9 L626.5,68.9 L628.7,68.1 L631.0,68.5 L631.0,81.3 L628.5,82.2 L626.6,81.3 L624.7,81.3 L622.4,81.5 L619.8,81.5 L617.2,81.8 L614.7,82.3 L612.4,82.0 L609.9,81.9 L607.9,81.7 L605.7,81.2 L604.2,81.3 L601.8,82.0 L599.6,81.7 L596.7,82.3 L594.0,81.4 L592.1,81.2 L589.8,81.5 L587.8,82.2 L585.4,82.2 L581.5,81.3 Z" fill="#16e6f2"/><rect x="600.8" y="69.5" width="1.3" height="11.799999999999997" fill="#000" opacity="0.7"/><rect x="605.3" y="69.5" width="1.3" height="11.799999999999997" fill="#000" opacity="0.7"/><rect x="596.0" y="68.3" width="0.8" height="2.5" fill="#000" opacity="0.35"/><rect x="607.6" y="68.3" width="0.8" height="2.5" fill="#000" opacity="0.35"/><rect x="616.9" y="68.3" width="0.8" height="2.5" fill="#000" opacity="0.35"/><rect x="630.2" y="79.3" width="0.8" height="2.5" fill="#000" opacity="0.35"/></g><g clip-path="url(#gclip2)"><path d="M14.0,99.8 L17.4,99.8 L18.0,114.5 L18.6,99.8 L22.0,99.8 L22.6,114.5 L23.2,99.8 L26.6,99.8 L27.2,114.5 L27.8,99.8 L31.2,99.8 L31.8,114.5 L32.4,99.8 L35.8,99.8 L36.4,114.5 L37.0,99.8 L40.4,99.8 L41.0,114.5 L41.6,99.8 L42.0,99.8 L42.0,114.5 L46.8,114.5 L47.5,99.8 L48.2,114.5 L53.0,114.5 L53.7,99.8 L54.4,114.5 L59.2,114.5 L59.9,99.8 L60.6,114.5 L65.4,114.5 L66.1,99.8 L66.8,114.5 L71.6,114.5 L72.3,99.8 L73.0,114.5 L77.8,114.5 L78.5,99.8 L79.2,114.5 L84.0,114.5 L84.7,99.8 L85.4,114.5 L90.2,114.5 L90.9,99.8 L91.6,114.5 L96.4,114.5 L97.1,99.8 L97.8,114.5 L102.6,114.5 L103.3,99.8 L104.0,114.5 L106.0,114.5 L106.0,99.8 L109.0,99.8 L109.0,114.5 L112.0,114.5 L112.0,99.8 L112.0,99.8 L112.0,106.0 L180.0,106.0" fill="none" stroke="#ffc800" stroke-width="1.15" /><path d="M251.0,99.8 L252.5,99.8 L252.5,114.5 L254.0,114.5 L254.0,99.8 L255.5,99.8 L255.5,114.5 L257.0,114.5 L257.0,99.8 L258.5,99.8 L258.5,114.5 L260.0,114.5 L260.0,99.8 L261.5,99.8 L261.5,114.5 L263.0,114.5 L263.0,99.8 L264.5,99.8 L264.5,114.5 L266.0,114.5 L266.0,99.8 L267.5,99.8 L267.5,114.5 L269.0,114.5 L269.0,99.8 L270.5,99.8 L270.5,114.5 L272.0,114.5 L272.0,99.8 L273.5,99.8 L273.5,114.5 L275.0,114.5 L275.0,99.8 L276.5,99.8 L276.5,114.5 L278.0,114.5 L278.0,99.8 L279.5,99.8 L279.5,114.5 L281.0,114.5 L281.0,99.8 L282.5,99.8 L282.5,114.5 L284.0,114.5 L284.0,99.8 L285.5,99.8 L285.5,114.5 L287.0,114.5 L287.0,99.8 L288.5,99.8 L288.5,114.5 L290.0,114.5 L290.0,99.8 L291.5,99.8 L291.5,114.5 L293.0,114.5 L293.0,99.8 L294.5,99.8 L294.5,114.5 L296.0,114.5 L296.0,99.8 L296.0,99.8 L296.0,99.8 L299.1,99.8 L299.1,114.5 L302.2,114.5 L302.2,99.8 L305.3,99.8 L305.3,114.5 L308.4,114.5 L308.4,99.8 L311.5,99.8 L311.5,114.5 L314.6,114.5 L314.6,99.8 L317.7,99.8 L317.7,114.5 L320.8,114.5 L320.8,99.8 L323.9,99.8 L323.9,114.5 L327.0,114.5 L327.0,99.8 L330.0,99.8 L330.0,99.8 L334.4,99.8 L334.4,114.5 L338.7,114.5 L338.7,99.8 L343.1,99.8 L343.1,114.5 L347.4,114.5 L347.4,99.8 L351.8,99.8 L351.8,114.5 L356.1,114.5 L356.1,99.8 L360.5,99.8 L360.5,114.5 L364.8,114.5 L364.8,99.8 L369.2,99.8 L369.2,114.5 L373.5,114.5 L373.5,99.8 L377.9,99.8 L377.9,114.5 L382.2,114.5 L382.2,99.8 L386.6,99.8 L386.6,114.5 L390.9,114.5 L390.9,99.8 L395.3,99.8 L395.3,114.5 L399.6,114.5 L399.6,99.8 L404.0,99.8 L404.0,114.5 L408.3,114.5 L408.3,99.8 L410.0,99.8 L410.0,99.8 L413.6,99.8 L414.2,114.5 L414.8,99.8 L418.4,99.8 L419.0,114.5 L419.6,99.8 L423.2,99.8 L423.8,114.5 L424.4,99.8 L428.0,99.8 L428.6,114.5 L429.2,99.8 L432.8,99.8 L433.4,114.5 L434.0,99.8 L437.6,99.8 L438.2,114.5 L438.8,99.8 L442.4,99.8 L443.0,114.5 L443.6,99.8 L447.0,99.8 L447.0,114.5 L451.8,114.5 L452.5,99.8 L453.2,114.5 L458.0,114.5 L458.7,99.8 L459.4,114.5 L464.2,114.5 L464.9,99.8 L465.6,114.5 L470.4,114.5 L471.1,99.8 L471.8,114.5 L476.6,114.5 L477.3,99.8 L478.0,114.5 L482.8,114.5 L483.5,99.8 L484.2,114.5 L489.0,114.5 L489.7,99.8 L490.4,114.5 L495.2,114.5 L495.9,99.8 L496.6,114.5 L501.4,114.5 L502.1,99.8 L502.8,114.5 L505.0,114.5 L505.0,99.8 L508.0,99.8 L508.0,114.5 L511.0,114.5 L511.0,99.8 L511.0,99.8 L511.0,106.0 L581.0,106.0" fill="none" stroke="#ffc800" stroke-width="1.15" /><path d="M179.0,113.8 L179.0,105.3 L180.5,103.5 L182.0,103.9 L183.5,102.3 L185.0,102.7 L187.0,101.5 L189.0,101.7 L189.0,100.8 L191.4,101.5 L193.6,100.8 L195.7,100.6 L198.2,101.8 L200.1,101.6 L201.8,101.7 L204.6,100.8 L206.3,101.5 L208.3,101.0 L211.3,101.6 L212.9,100.6 L215.4,100.6 L218.2,101.1 L219.9,100.9 L222.6,101.7 L224.6,100.9 L226.2,101.1 L228.8,101.1 L230.5,101.2 L232.1,101.0 L235.0,101.2 L237.1,101.9 L238.7,101.2 L240.5,100.8 L243.4,101.0 L246.0,101.7 L248.0,101.8 L249.6,100.9 L251.0,101.3 L251.0,114.4 L249.0,113.8 L247.5,114.1 L245.2,114.4 L242.9,114.8 L240.8,113.7 L239.2,114.2 L237.5,114.5 L235.2,114.4 L233.1,114.0 L230.4,114.0 L228.7,114.5 L226.4,114.3 L224.6,114.3 L222.9,113.8 L220.5,114.1 L218.5,113.8 L215.9,114.4 L213.0,114.6 L210.5,114.0 L207.6,114.0 L206.0,114.7 L203.9,114.3 L201.0,114.4 L198.3,114.7 L196.5,113.8 L193.7,114.4 L191.2,114.3 L189.0,114.1 L186.0,113.9 L184.4,114.7 L182.7,114.2 L179.0,113.8 Z" fill="#ffc800"/><rect x="200.5" y="102.3" width="1.3" height="11.5" fill="#000" opacity="0.7"/><rect x="204.5" y="102.3" width="1.3" height="11.5" fill="#000" opacity="0.7"/><rect x="196.9" y="101.1" width="0.8" height="2.5" fill="#000" opacity="0.35"/><rect x="206.1" y="101.1" width="0.8" height="2.5" fill="#000" opacity="0.35"/><rect x="219.0" y="101.1" width="0.8" height="2.5" fill="#000" opacity="0.35"/><rect x="229.3" y="101.1" width="0.8" height="2.5" fill="#000" opacity="0.35"/><rect x="236.6" y="101.1" width="0.8" height="2.5" fill="#000" opacity="0.35"/><rect x="244.4" y="111.8" width="0.8" height="2.5" fill="#000" opacity="0.35"/><rect x="252.1" y="101.1" width="0.8" height="2.5" fill="#000" opacity="0.35"/><path d="M581.5,113.8 L581.5,105.3 L583.0,103.5 L584.5,103.9 L586.0,102.3 L587.5,102.7 L589.5,101.5 L591.5,101.7 L591.5,101.0 L594.3,101.4 L596.6,101.6 L599.2,101.2 L602.0,101.4 L605.0,100.7 L606.6,100.5 L609.4,101.5 L612.2,101.5 L614.1,101.2 L616.8,101.7 L619.4,101.6 L621.6,100.7 L623.4,100.8 L625.6,101.8 L627.3,101.3 L629.6,101.0 L631.0,101.3 L631.0,114.1 L629.1,113.9 L627.0,114.3 L624.3,114.8 L622.0,113.8 L620.2,113.8 L618.4,114.6 L616.1,114.1 L614.5,114.2 L612.5,114.0 L610.8,113.9 L608.8,114.6 L606.7,114.1 L604.2,114.4 L602.6,114.7 L600.9,114.4 L598.0,114.3 L595.1,114.4 L592.9,114.3 L591.3,113.7 L589.6,114.1 L588.0,114.3 L585.2,114.4 L581.5,113.8 Z" fill="#ffc800"/><rect x="600.8" y="102.3" width="1.3" height="11.5" fill="#000" opacity="0.7"/><rect x="605.3" y="102.3" width="1.3" height="11.5" fill="#000" opacity="0.7"/><rect x="601.4" y="111.8" width="0.8" height="2.5" fill="#000" opacity="0.35"/><rect x="609.0" y="111.8" width="0.8" height="2.5" fill="#000" opacity="0.35"/><rect x="621.4" y="111.8" width="0.8" height="2.5" fill="#000" opacity="0.35"/><rect x="632.6" y="101.1" width="0.8" height="2.5" fill="#000" opacity="0.35"/></g><text x="3.8" y="44.2" font-size="7.8" fill="#ff0fae" text-anchor="start" font-weight="normal" >C2</text><line x1="5.5" y1="47.5" x2="14" y2="47.5" stroke="#ff0fae" stroke-width="1.5" /><text x="3.8" y="77.3" font-size="7.8" fill="#16e6f2" text-anchor="start" font-weight="normal" >C3</text><line x1="5" y1="81" x2="14" y2="81" stroke="#16e6f2" stroke-width="1.5" /><text x="3.8" y="103.3" font-size="7.8" fill="#ffc800" text-anchor="start" font-weight="normal" >F1</text><line x1="5" y1="107" x2="14" y2="107" stroke="#ffc800" stroke-width="1.5" /><path d="M180.3,54 L177.8,59 L182.8,59 Z" fill="#ff0fae" stroke="none" stroke-width="1" /><path d="M180.3,86.2 L177.8,91.2 L182.8,91.2 Z" fill="#16e6f2" stroke="none" stroke-width="1" /><path d="M180.3,118.4 L177.8,123.4 L182.8,123.4 Z" fill="#ffc800" stroke="none" stroke-width="1" /><path d="M632.5,71 L638.8,67.8 L638.8,74.2 Z" fill="#16e6f2" stroke="none" stroke-width="1" /><text x="3.8" y="166.4" font-size="9" fill="#fff" text-anchor="start" font-weight="bold" >Measure</text><text x="3.8" y="179.17000000000002" font-size="8.5" fill="#f0f0f0" text-anchor="start" font-weight="normal" >value</text><text x="141.2" y="179.17000000000002" font-size="8.5" fill="#f0f0f0" text-anchor="end" font-weight="normal" >808 ps</text><text x="3.8" y="191.94" font-size="8.5" fill="#f0f0f0" text-anchor="start" font-weight="normal" >mean</text><text x="141.2" y="191.94" font-size="8.5" fill="#f0f0f0" text-anchor="end" font-weight="normal" >887.79 ps</text><text x="3.8" y="204.71" font-size="8.5" fill="#f0f0f0" text-anchor="start" font-weight="normal" >min</text><text x="141.2" y="204.71" font-size="8.5" fill="#f0f0f0" text-anchor="end" font-weight="normal" >656 ps</text><text x="3.8" y="217.48000000000002" font-size="8.5" fill="#f0f0f0" text-anchor="start" font-weight="normal" >max</text><text x="141.2" y="217.48000000000002" font-size="8.5" fill="#f0f0f0" text-anchor="end" font-weight="normal" >1.346 ns</text><text x="3.8" y="230.25" font-size="8.5" fill="#f0f0f0" text-anchor="start" font-weight="normal" >sdev</text><text x="141.2" y="230.25" font-size="8.5" fill="#f0f0f0" text-anchor="end" font-weight="normal" >128.45 ps</text><text x="3.8" y="243.02" font-size="8.5" fill="#f0f0f0" text-anchor="start" font-weight="normal" >num</text><text x="141.2" y="243.02" font-size="8.5" fill="#f0f0f0" text-anchor="end" font-weight="normal" >107</text><text x="3.8" y="255.79000000000002" font-size="8.5" fill="#f0f0f0" text-anchor="start" font-weight="normal" >status</text><text x="141.2" y="166.4" font-size="8.5" fill="#f0f0f0" text-anchor="end" font-weight="normal" >P1:rise(F1)</text><path d="M133.3,252.6 L136.2,255.3 L141.3,249.3" fill="none" stroke="#22dd33" stroke-width="2" /><text x="167.5" y="166.4" font-size="8.5" fill="#7a7a7a" text-anchor="start" font-weight="normal" >P2:rise(C3)</text><text x="255.8" y="166.4" font-size="8.5" fill="#7a7a7a" text-anchor="start" font-weight="normal" >P3:- - -</text><text x="325.7" y="166.4" font-size="8.5" fill="#7a7a7a" text-anchor="start" font-weight="normal" >P4:- - -</text><text x="396" y="166.4" font-size="8.5" fill="#7a7a7a" text-anchor="start" font-weight="normal" >P5:- - -</text><text x="467" y="166.4" font-size="8.5" fill="#7a7a7a" text-anchor="start" font-weight="normal" >P6:- - -</text><text x="536.8" y="166.4" font-size="8.5" fill="#7a7a7a" text-anchor="start" font-weight="normal" >P7:- - -</text><text x="607.6" y="166.4" font-size="8.5" fill="#7a7a7a" text-anchor="start" font-weight="normal" >P8:- - -</text><rect x="3.5" y="260.5" width="77.0" height="33.0" fill="#67649c" stroke="#a9a2d6" stroke-width="1" rx="2.5" /><rect x="4.5" y="261.3" width="75.0" height="10" fill="#ff10a0" stroke="none" stroke-width="1" rx="0" /><text x="5.5" y="269.1" font-size="8.5" fill="#300020" text-anchor="start" font-weight="normal" >C2</text><rect x="57.5" y="261.8" width="21" height="9" fill="#1a0a20" stroke="none" stroke-width="1" rx="1.5" /><text x="68.0" y="269.5" font-size="7.5" fill="#ff10a0" text-anchor="middle" font-weight="normal" >DC50</text><rect x="38.5" y="261.8" width="18" height="9" fill="#1a0a20" stroke="none" stroke-width="1" rx="1.5" /><text x="47.5" y="269.5" font-size="7.5" fill="#ff10a0" text-anchor="middle" font-weight="normal" >BwL</text><text x="77.5" y="281.0" font-size="8.5" fill="#fff" text-anchor="end" font-weight="normal" >50.0 mV/div</text><text x="77.5" y="290.3" font-size="8.5" fill="#fff" text-anchor="end" font-weight="normal" >-107.0 mV</text><rect x="83.5" y="260.5" width="77.0" height="33.0" fill="#67649c" stroke="#a9a2d6" stroke-width="1" rx="2.5" /><rect x="84.5" y="261.3" width="75.0" height="10" fill="#10e8f0" stroke="none" stroke-width="1" rx="0" /><text x="85.5" y="269.1" font-size="8.5" fill="#003040" text-anchor="start" font-weight="normal" >C3</text><rect x="137.5" y="261.8" width="21" height="9" fill="#001820" stroke="none" stroke-width="1" rx="1.5" /><text x="148.0" y="269.5" font-size="7.5" fill="#10e8f0" text-anchor="middle" font-weight="normal" >DC50</text><rect x="118.5" y="261.8" width="18" height="9" fill="#001820" stroke="none" stroke-width="1" rx="1.5" /><text x="127.5" y="269.5" font-size="7.5" fill="#10e8f0" text-anchor="middle" font-weight="normal" >BwL</text><text x="157.5" y="281.0" font-size="8.5" fill="#fff" text-anchor="end" font-weight="normal" >50.0 mV/div</text><text x="157.5" y="290.3" font-size="8.5" fill="#fff" text-anchor="end" font-weight="normal" >-136.0 mV</text><rect x="164.5" y="260.5" width="76.5" height="33.0" fill="#c896d2" stroke="#a9a2d6" stroke-width="1" rx="2.5" /><rect x="165.5" y="261.3" width="74.5" height="10" fill="#ffc800" stroke="none" stroke-width="1" rx="0" /><text x="166.5" y="269.1" font-size="8.5" fill="#302000" text-anchor="start" font-weight="normal" >F1</text><text x="238" y="269.5" font-size="8.5" fill="#302000" text-anchor="end" font-weight="normal" >(C2-C3)</text><text x="238" y="281.0" font-size="8.5" fill="#fff" text-anchor="end" font-weight="normal" >100 mV/div</text><text x="238" y="290.3" font-size="8.5" fill="#fff" text-anchor="end" font-weight="normal" >200 ns/div</text><rect x="466.5" y="260.5" width="89.0" height="33.0" fill="#6664a2" stroke="#a9a2d6" stroke-width="1" rx="2.5" /><rect x="467.5" y="261.3" width="87.0" height="10" fill="#ffffff" stroke="none" stroke-width="1" rx="0" /><text x="468.5" y="269.1" font-size="8.5" fill="#000" text-anchor="start" font-weight="normal" >Timebase</text><text x="552.5" y="269.5" font-size="8.5" fill="#000" text-anchor="end" font-weight="normal" >-460 ns</text><text x="552.5" y="281.0" font-size="8.5" fill="#fff" text-anchor="end" font-weight="normal" >200 ns/div</text><text x="469.5" y="290.3" font-size="8.5" fill="#fff" text-anchor="start" font-weight="normal" >10.0 kS</text><text x="552.5" y="290.3" font-size="8.5" fill="#fff" text-anchor="end" font-weight="normal" >5.0 GS/s</text><rect x="558.5" y="260.5" width="77.5" height="33.0" fill="#6664a2" stroke="#a9a2d6" stroke-width="1" rx="2.5" /><rect x="559.5" y="261.3" width="75.5" height="10" fill="#ffffff" stroke="none" stroke-width="1" rx="0" /><text x="560.5" y="269.1" font-size="8.5" fill="#000" text-anchor="start" font-weight="normal" >Trigger</text><text x="561.5" y="281.0" font-size="8.5" fill="#fff" text-anchor="start" font-weight="normal" >Stop</text><text x="633" y="281.0" font-size="8.5" fill="#fff" text-anchor="end" font-weight="normal" >158.0 mV</text><text x="561.5" y="290.3" font-size="8.5" fill="#fff" text-anchor="start" font-weight="normal" >Width</text><text x="633" y="290.3" font-size="8.5" fill="#fff" text-anchor="end" font-weight="normal" >Negative</text><rect x="621.2" y="262.4" width="12.4" height="7.8" fill="#000" stroke="none" stroke-width="1" rx="2" /><text x="627.4" y="269.3" font-size="8" fill="#fff" text-anchor="middle" font-weight="bold" >C3</text><rect x="603" y="299" width="34" height="23" fill="#262452" stroke="none" stroke-width="1" rx="1.5" /><rect x="602" y="298" width="34" height="23" fill="#6664a2" stroke="none" stroke-width="1" rx="1.5" /><rect x="602" y="298" width="34" height="1" fill="#9c9ad2" stroke="none" stroke-width="1" rx="0" /><rect x="602" y="298" width="1" height="23" fill="#9c9ad2" stroke="none" stroke-width="1" rx="0" /><rect x="635" y="299" width="1" height="22" fill="#58569a" stroke="none" stroke-width="1" rx="0" /><rect x="603" y="320" width="33" height="1" fill="#58569a" stroke="none" stroke-width="1" rx="0" /><text x="619.5" y="313.5" font-size="10" fill="#fff" text-anchor="middle" font-weight="normal" >Close</text><path d="M3.5,461.5 L3.5,303 Q3.5,299.5 7,299.5 L91,299.5 Q94.5,299.5 94.5,303 L94.5,324.5 L636.5,324.5 L636.5,461.5 Z" fill="#36346a" stroke="none" stroke-width="1" /><path d="M3.5,461.5 L3.5,303 Q3.5,299.5 7,299.5 L91,299.5 Q94.5,299.5 94.5,303 L94.5,324.5 L636.5,324.5" fill="none" stroke="#8e8cc8" stroke-width="1" /><rect x="10" y="305.8" width="77.3" height="11" fill="#ff10a8" stroke="none" stroke-width="1" rx="1.5" /><text x="13.8" y="314.9" font-size="9" fill="#2a0838" text-anchor="start" font-weight="normal" textLength="69.2" lengthAdjust="spacingAndGlyphs">C2 Vertical Adjust</text><path d="M12,364 L12,339 Q12,337 14,337 L58.5,337" fill="none" stroke="#312f64" stroke-width="1" /><path d="M12,364 L55.5,364 Q58.5,364 58.5,361 L58.5,337" fill="none" stroke="#a9a7dc" stroke-width="1" /><text x="35.5" y="346" font-size="9.9" fill="#ececf6" text-anchor="middle" font-weight="normal" >Trace On</text><rect x="29" y="349.5" width="12.5" height="12.5" fill="#fff" stroke="none" stroke-width="1" rx="0" /><path d="M31.5,355 L34.5,359 L39.5,351.5" fill="none" stroke="#22bb22" stroke-width="2.2" /><text x="121.5" y="346.5" font-size="9.9" fill="#ececf6" text-anchor="middle" font-weight="normal" >Volts/div</text><path d="M86.5,364.5 L86.5,351 Q86.5,349 88.5,349 L157.5,349" fill="none" stroke="#312f64" stroke-width="1" /><path d="M86.5,364.5 L154.5,364.5 Q157.5,364.5 157.5,361.5 L157.5,349" fill="none" stroke="#a9a7dc" stroke-width="1" /><text x="90.3" y="360" font-size="9.9" fill="#fff" text-anchor="start" font-weight="normal" >50.0 mV</text><text x="121.5" y="377.8" font-size="9.9" fill="#ececf6" text-anchor="middle" font-weight="normal" >Variable Gain</text><path d="M86.5,395.5 L86.5,371 Q86.5,369 88.5,369 L157.5,369" fill="none" stroke="#312f64" stroke-width="1" /><path d="M86.5,395.5 L154.5,395.5 Q157.5,395.5 157.5,392.5 L157.5,369" fill="none" stroke="#a9a7dc" stroke-width="1" /><rect x="115.5" y="381.5" width="12.5" height="11.5" fill="#fff" stroke="none" stroke-width="1" rx="0" /><rect x="163" y="337" width="26" height="28" fill="#262452" stroke="none" stroke-width="1" rx="1.5" /><rect x="162" y="336" width="26" height="28" fill="#6664a2" stroke="none" stroke-width="1" rx="1.5" /><rect x="162" y="336" width="26" height="1" fill="#9c9ad2" stroke="none" stroke-width="1" rx="0" /><rect x="162" y="336" width="1" height="28" fill="#9c9ad2" stroke="none" stroke-width="1" rx="0" /><rect x="187" y="337" width="1" height="27" fill="#58569a" stroke="none" stroke-width="1" rx="0" /><rect x="163" y="363" width="25" height="1" fill="#58569a" stroke="none" stroke-width="1" rx="0" /><path d="M165.75,354.75 L184.75,354.75 L175.25,345.75 Z" fill="#000" stroke="none" stroke-width="1" /><rect x="163" y="367" width="26" height="28" fill="#262452" stroke="none" stroke-width="1" rx="1.5" /><rect x="162" y="366" width="26" height="28" fill="#6664a2" stroke="none" stroke-width="1" rx="1.5" /><rect x="162" y="366" width="26" height="1" fill="#9c9ad2" stroke="none" stroke-width="1" rx="0" /><rect x="162" y="366" width="1" height="28" fill="#9c9ad2" stroke="none" stroke-width="1" rx="0" /><rect x="187" y="367" width="1" height="27" fill="#58569a" stroke="none" stroke-width="1" rx="0" /><rect x="163" y="393" width="25" height="1" fill="#58569a" stroke="none" stroke-width="1" rx="0" /><path d="M166.25,376.5 L184.25,376.5 L175.25,385.5 Z" fill="#000" stroke="none" stroke-width="1" /><text x="258" y="346.5" font-size="9.9" fill="#ececf6" text-anchor="middle" font-weight="normal" >Offset</text><path d="M222,364 L222,351 Q222,349 224,349 L293.5,349" fill="none" stroke="#312f64" stroke-width="1" /><path d="M222,364 L290.5,364 Q293.5,364 293.5,361 L293.5,349" fill="none" stroke="#a9a7dc" stroke-width="1" /><text x="225.8" y="359.5" font-size="9.9" fill="#fff" text-anchor="start" font-weight="normal" >-107 mV</text><rect x="222" y="370" width="72" height="27" fill="#262452" stroke="none" stroke-width="1" rx="1.5" /><rect x="221" y="369" width="72" height="27" fill="#6664a2" stroke="none" stroke-width="1" rx="1.5" /><rect x="221" y="369" width="72" height="1" fill="#9c9ad2" stroke="none" stroke-width="1" rx="0" /><rect x="221" y="369" width="1" height="27" fill="#9c9ad2" stroke="none" stroke-width="1" rx="0" /><rect x="292" y="370" width="1" height="26" fill="#58569a" stroke="none" stroke-width="1" rx="0" /><rect x="222" y="395" width="71" height="1" fill="#58569a" stroke="none" stroke-width="1" rx="0" /><text x="257.3" y="380.8" font-size="9.9" fill="#fff" text-anchor="middle" font-weight="normal" >Zero</text><text x="257.3" y="392.4" font-size="9.9" fill="#fff" text-anchor="middle" font-weight="normal" >Offset</text><rect x="299" y="337" width="26" height="28" fill="#262452" stroke="none" stroke-width="1" rx="1.5" /><rect x="298" y="336" width="26" height="28" fill="#6664a2" stroke="none" stroke-width="1" rx="1.5" /><rect x="298" y="336" width="26" height="1" fill="#9c9ad2" stroke="none" stroke-width="1" rx="0" /><rect x="298" y="336" width="1" height="28" fill="#9c9ad2" stroke="none" stroke-width="1" rx="0" /><rect x="323" y="337" width="1" height="27" fill="#58569a" stroke="none" stroke-width="1" rx="0" /><rect x="299" y="363" width="25" height="1" fill="#58569a" stroke="none" stroke-width="1" rx="0" /><path d="M301.75,354.75 L320.75,354.75 L311.25,345.75 Z" fill="#000" stroke="none" stroke-width="1" /><rect x="299" y="369" width="26" height="27" fill="#262452" stroke="none" stroke-width="1" rx="1.5" /><rect x="298" y="368" width="26" height="27" fill="#6664a2" stroke="none" stroke-width="1" rx="1.5" /><rect x="298" y="368" width="26" height="1" fill="#9c9ad2" stroke="none" stroke-width="1" rx="0" /><rect x="298" y="368" width="1" height="27" fill="#9c9ad2" stroke="none" stroke-width="1" rx="0" /><rect x="323" y="369" width="1" height="26" fill="#58569a" stroke="none" stroke-width="1" rx="0" /><rect x="299" y="394" width="25" height="1" fill="#58569a" stroke="none" stroke-width="1" rx="0" /><path d="M302.25,378.0 L320.25,378.0 L311.25,387.0 Z" fill="#000" stroke="none" stroke-width="1" /><text x="394.7" y="346.2" font-size="9.9" fill="#ececf6" text-anchor="middle" font-weight="normal" >Bandwidth</text><path d="M360.5,363.8 L360.5,352 Q360.5,350 362.5,350 L430.5,350" fill="none" stroke="#312f64" stroke-width="1" /><path d="M360.5,363.8 L427.5,363.8 Q430.5,363.8 430.5,360.8 L430.5,350" fill="none" stroke="#a9a7dc" stroke-width="1" /><text x="363.4" y="359.4" font-size="9.9" fill="#fff" text-anchor="start" font-weight="normal" >3GHz</text><text x="494.7" y="346.2" font-size="9.9" fill="#ececf6" text-anchor="middle" font-weight="normal" >Coupling</text><path d="M460.5,363.8 L460.5,352 Q460.5,350 462.5,350 L530.5,350" fill="none" stroke="#312f64" stroke-width="1" /><path d="M460.5,363.8 L527.5,363.8 Q530.5,363.8 530.5,360.8 L530.5,350" fill="none" stroke="#a9a7dc" stroke-width="1" /><text x="464.4" y="359.4" font-size="9.9" fill="#fff" text-anchor="start" font-weight="normal" >DC50Ω</text><text x="494.7" y="391.6" font-size="9.9" fill="#ececf6" text-anchor="middle" font-weight="normal" >Deskew</text><path d="M460.5,409.7 L460.5,397.6 Q460.5,395.6 462.5,395.6 L530.5,395.6" fill="none" stroke="#312f64" stroke-width="1" /><path d="M460.5,409.7 L527.5,409.7 Q530.5,409.7 530.5,406.7 L530.5,395.6" fill="none" stroke="#a9a7dc" stroke-width="1" /><text x="464.4" y="405.4" font-size="9.9" fill="#fff" text-anchor="start" font-weight="normal" >0.0 ps</text><text x="494.7" y="438" font-size="9.9" fill="#ececf6" text-anchor="middle" font-weight="normal" >Probe Atten.</text><path d="M460.5,457 L460.5,445 Q460.5,443 462.5,443 L531,443" fill="none" stroke="#312f64" stroke-width="1" /><path d="M460.5,457 L528,457 Q531,457 531,454 L531,443" fill="none" stroke="#a9a7dc" stroke-width="1" /><text x="464.4" y="452.3" font-size="9.9" fill="#fff" text-anchor="start" font-weight="normal" >÷1</text><line x1="541.5" y1="329" x2="541.5" y2="457" stroke="#8e8cc8" stroke-width="1" /><text x="586" y="338.5" font-size="10" fill="#e8e830" text-anchor="middle" font-weight="normal" >Pre-Processing</text><text x="588" y="359.4" font-size="9.9" fill="#ececf6" text-anchor="middle" font-weight="normal" >Averaging</text><path d="M553.5,377.5 L553.5,365.5 Q553.5,363.5 555.5,363.5 L623,363.5" fill="none" stroke="#312f64" stroke-width="1" /><path d="M553.5,377.5 L620,377.5 Q623,377.5 623,374.5 L623,363.5" fill="none" stroke="#a9a7dc" stroke-width="1" /><text x="557.7" y="373.3" font-size="9.9" fill="#fff" text-anchor="start" font-weight="normal" >1 sweep</text><text x="588" y="398" font-size="9.9" fill="#ececf6" text-anchor="middle" font-weight="normal" >Interpolation</text><path d="M553.5,416 L553.5,404 Q553.5,402 555.5,402 L623,402" fill="none" stroke="#312f64" stroke-width="1" /><path d="M553.5,416 L620,416 Q623,416 623,413 L623,402" fill="none" stroke="#a9a7dc" stroke-width="1" /><text x="557.7" y="411.5" font-size="9.9" fill="#fff" text-anchor="start" font-weight="normal" >Linear</text><text x="588.4" y="438" font-size="9.9" fill="#ececf6" text-anchor="middle" font-weight="normal" >Invert</text><path d="M553,457 L553,431.7 Q553,429.7 555,429.7 L624,429.7" fill="none" stroke="#312f64" stroke-width="1" /><path d="M553,457 L621,457 Q624,457 624,454 L624,429.7" fill="none" stroke="#a9a7dc" stroke-width="1" /><rect x="582" y="443" width="12.7" height="12.6" fill="#fff" stroke="none" stroke-width="1" rx="0" /><text x="12.8" y="420.6" font-size="9.95" fill="#ececf6" text-anchor="start" font-weight="normal" >Actions for trace C2</text><rect x="12" y="430" width="50" height="27" fill="#262452" stroke="none" stroke-width="1" rx="1.5" /><rect x="11" y="429" width="50" height="27" fill="#6664a2" stroke="none" stroke-width="1" rx="1.5" /><rect x="11" y="429" width="50" height="1" fill="#9c9ad2" stroke="none" stroke-width="1" rx="0" /><rect x="11" y="429" width="1" height="27" fill="#9c9ad2" stroke="none" stroke-width="1" rx="0" /><rect x="60" y="430" width="1" height="26" fill="#58569a" stroke="none" stroke-width="1" rx="0" /><rect x="12" y="455" width="49" height="1" fill="#58569a" stroke="none" stroke-width="1" rx="0" /><text x="36.2" y="453.8" font-size="9.9" fill="#fff" text-anchor="middle" font-weight="normal" >Measure</text><rect x="67" y="430" width="50" height="27" fill="#262452" stroke="none" stroke-width="1" rx="1.5" /><rect x="66" y="429" width="50" height="27" fill="#6664a2" stroke="none" stroke-width="1" rx="1.5" /><rect x="66" y="429" width="50" height="1" fill="#9c9ad2" stroke="none" stroke-width="1" rx="0" /><rect x="66" y="429" width="1" height="27" fill="#9c9ad2" stroke="none" stroke-width="1" rx="0" /><rect x="115" y="430" width="1" height="26" fill="#58569a" stroke="none" stroke-width="1" rx="0" /><rect x="67" y="455" width="49" height="1" fill="#58569a" stroke="none" stroke-width="1" rx="0" /><text x="91.2" y="453.8" font-size="9.9" fill="#fff" text-anchor="middle" font-weight="normal" >Zoom</text><rect x="123" y="430" width="50" height="27" fill="#262452" stroke="none" stroke-width="1" rx="1.5" /><rect x="122" y="429" width="50" height="27" fill="#6664a2" stroke="none" stroke-width="1" rx="1.5" /><rect x="122" y="429" width="50" height="1" fill="#9c9ad2" stroke="none" stroke-width="1" rx="0" /><rect x="122" y="429" width="1" height="27" fill="#9c9ad2" stroke="none" stroke-width="1" rx="0" /><rect x="171" y="430" width="1" height="26" fill="#58569a" stroke="none" stroke-width="1" rx="0" /><rect x="123" y="455" width="49" height="1" fill="#58569a" stroke="none" stroke-width="1" rx="0" /><text x="146.5" y="453.8" font-size="9.9" fill="#fff" text-anchor="middle" font-weight="normal" >Math</text><rect x="178" y="430" width="50" height="27" fill="#262452" stroke="none" stroke-width="1" rx="1.5" /><rect x="177" y="429" width="50" height="27" fill="#6664a2" stroke="none" stroke-width="1" rx="1.5" /><rect x="177" y="429" width="50" height="1" fill="#9c9ad2" stroke="none" stroke-width="1" rx="0" /><rect x="177" y="429" width="1" height="27" fill="#9c9ad2" stroke="none" stroke-width="1" rx="0" /><rect x="226" y="430" width="1" height="26" fill="#58569a" stroke="none" stroke-width="1" rx="0" /><rect x="178" y="455" width="49" height="1" fill="#58569a" stroke="none" stroke-width="1" rx="0" /><text x="201.8" y="453.8" font-size="9.9" fill="#fff" text-anchor="middle" font-weight="normal" >Store</text><rect x="233" y="430" width="50" height="27" fill="#262452" stroke="none" stroke-width="1" rx="1.5" /><rect x="232" y="429" width="50" height="27" fill="#6664a2" stroke="none" stroke-width="1" rx="1.5" /><rect x="232" y="429" width="50" height="1" fill="#9c9ad2" stroke="none" stroke-width="1" rx="0" /><rect x="232" y="429" width="1" height="27" fill="#9c9ad2" stroke="none" stroke-width="1" rx="0" /><rect x="281" y="430" width="1" height="26" fill="#58569a" stroke="none" stroke-width="1" rx="0" /><rect x="233" y="455" width="49" height="1" fill="#58569a" stroke="none" stroke-width="1" rx="0" /><text x="257.1" y="453.8" font-size="9.9" fill="#fff" text-anchor="middle" font-weight="normal" >Find Scale</text><rect x="287.6" y="428.8" width="49.5" height="28" fill="none" stroke="#7a78b8" stroke-width="1" rx="2.5" /><text x="312.1" y="453.8" font-size="9.9" fill="#9896c0" text-anchor="middle" font-weight="normal" >Next Grid</text><rect x="343" y="430" width="50" height="27" fill="#262452" stroke="none" stroke-width="1" rx="1.5" /><rect x="342" y="429" width="50" height="27" fill="#6664a2" stroke="none" stroke-width="1" rx="1.5" /><rect x="342" y="429" width="50" height="1" fill="#9c9ad2" stroke="none" stroke-width="1" rx="0" /><rect x="342" y="429" width="1" height="27" fill="#9c9ad2" stroke="none" stroke-width="1" rx="0" /><rect x="391" y="430" width="1" height="26" fill="#58569a" stroke="none" stroke-width="1" rx="0" /><rect x="343" y="455" width="49" height="1" fill="#58569a" stroke="none" stroke-width="1" rx="0" /><text x="367.2" y="453.8" font-size="9.9" fill="#fff" text-anchor="middle" font-weight="normal" >Label</text><rect x="399" y="430" width="50" height="27" fill="#262452" stroke="none" stroke-width="1" rx="1.5" /><rect x="398" y="429" width="50" height="27" fill="#6664a2" stroke="none" stroke-width="1" rx="1.5" /><rect x="398" y="429" width="50" height="1" fill="#9c9ad2" stroke="none" stroke-width="1" rx="0" /><rect x="398" y="429" width="1" height="27" fill="#9c9ad2" stroke="none" stroke-width="1" rx="0" /><rect x="447" y="430" width="1" height="26" fill="#58569a" stroke="none" stroke-width="1" rx="0" /><rect x="399" y="455" width="49" height="1" fill="#58569a" stroke="none" stroke-width="1" rx="0" /><text x="422.9" y="453.8" font-size="9.9" fill="#fff" text-anchor="middle" font-weight="normal" >Probe Cal.</text><line x1="22" y1="435.5" x2="47" y2="435.5" stroke="#000" stroke-width="1.6" /><line x1="30" y1="432" x2="30" y2="444.5" stroke="#000" stroke-width="1.6" /><line x1="44.2" y1="432" x2="44.2" y2="444.5" stroke="#000" stroke-width="1.6" /><rect x="31.5" y="440" width="11" height="3" fill="#c8b888" stroke="none" stroke-width="1" rx="0" /><line x1="72" y1="438.2" x2="111" y2="438.2" stroke="#d8d098" stroke-width="1.2" /><circle cx="90.2" cy="436.8" r="5" fill="none" stroke="#000" stroke-width="1.3"/><line x1="94" y1="440.5" x2="99.5" y2="446" stroke="#000" stroke-width="1.8" /><path d="M86.5,439 L88.5,434 L91,439.5 L93,434.5" fill="none" stroke="#f0e040" stroke-width="1" /><text x="146.5" y="442.6" font-size="16.5" fill="#000" text-anchor="middle" font-weight="bold" style="font-family:'Liberation Serif',serif">f(x)</text><path d="M192.5,431.5 L197.5,436" fill="none" stroke="#000" stroke-width="2.4" /><path d="M194.5,438.5 L200,439 L199.5,433.5 Z" fill="#000" stroke="none" stroke-width="1" /><path d="M196.2,443 L205.5,433.5 L210.5,437.5 L201,447 Z" fill="#000" stroke="none" stroke-width="1" /><line x1="201.8" y1="447.2" x2="211" y2="438" stroke="#d8d8ec" stroke-width="0.9" /><path d="M240.5,431.5 Q247,431 250.5,436" fill="none" stroke="#e0d070" stroke-width="1.3" /><path d="M258,446 Q262,448.5 266.5,447" fill="none" stroke="#e0d070" stroke-width="1.3" /><rect x="245.5" y="434.5" width="18" height="11" fill="#0a2ad8" stroke="#30c8ff" stroke-width="1" rx="0" /><line x1="254.5" y1="434.5" x2="254.5" y2="445.5" stroke="#30c8ff" stroke-width="1" /><line x1="245.5" y1="440" x2="263.5" y2="440" stroke="#30c8ff" stroke-width="1" /><circle cx="254.5" cy="433.6" r="1.4" fill="#e8c040"/><circle cx="254.5" cy="446.4" r="1.4" fill="#e8c040"/><rect x="295.5" y="431.5" width="18" height="7" fill="#3a3a50" stroke="#a4a4a8" stroke-width="1" rx="0" /><path d="M296.5,433.5 L298,433.5 L298,436.5 L300,436.5 L300,433.5 L303,433.5 L303,436.5 L305,436.5 L305,433.5 L308,433.5 L308,436.5 L310,436.5 L310,433.5 L312.5,433.5" fill="none" stroke="#9c9a80" stroke-width="0.9" /><line x1="304.5" y1="431.5" x2="304.5" y2="438.5" stroke="#a4a4a8" stroke-width="0.8" /><rect x="306.5" y="439.5" width="18" height="7" fill="#3a3a48" stroke="#a4a4a8" stroke-width="1" rx="0" /><line x1="307" y1="443" x2="324" y2="443" stroke="#8ca070" stroke-width="1.6" /><line x1="315.5" y1="439.5" x2="315.5" y2="446.5" stroke="#a4a4a8" stroke-width="0.8" /><path d="M354.5,437.8 L359.5,432.5 L377.5,432.5 L377.5,443.2 L359.5,443.2 Z" fill="#f8f060" stroke="#000" stroke-width="1.3" /><circle cx="360.3" cy="437.8" r="1" fill="#000"/><defs><linearGradient id="pg" x1="0" y1="0" x2="0" y2="1"><stop offset="0" stop-color="#fff"/><stop offset="0.6" stop-color="#d8d8c8"/><stop offset="1" stop-color="#707060"/></linearGradient></defs><rect x="410" y="432" width="15.5" height="11.3" fill="url(#pg)" stroke="none" stroke-width="1" rx="0" /><path d="M425.3,431.8 L431.2,437.7 L425.3,443.5 Z" fill="#000" stroke="none" stroke-width="1" /><line x1="431" y1="437.7" x2="435.5" y2="437.7" stroke="#d0d0e8" stroke-width="0.8" /><text x="7.5" y="476.5" font-size="12.5" fill="#1818e8" text-anchor="start" font-weight="bold" textLength="41.8" lengthAdjust="spacingAndGlyphs">LeCroy</text><line x1="7.5" y1="478.5" x2="49.3" y2="478.5" stroke="#1818e8" stroke-width="1.3" /><text x="627.5" y="476.6" font-size="9.7" fill="#fff" text-anchor="end" font-weight="normal" >6/13/2008 4:00:38 PM</text>
</svg></body></html>
